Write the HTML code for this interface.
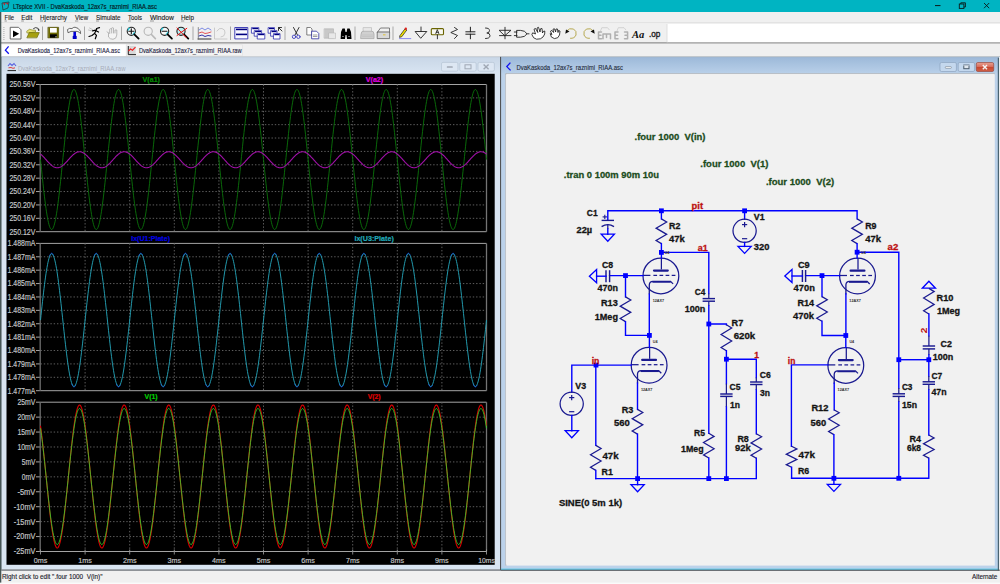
<!DOCTYPE html><html><head><meta charset="utf-8"><style>html,body{margin:0;padding:0;width:1000px;height:584px;overflow:hidden;background:#F0F0F0}svg text{font-family:"Liberation Sans",sans-serif}</style></head><body><svg width="1000" height="584" viewBox="0 0 1000 584" style="position:absolute;left:0;top:0">
<rect x="0" y="0" width="1000" height="584" fill="#F0F0F0"/>
<rect x="0" y="0" width="1000" height="12" fill="#00B4C2"/>
<text x="12.9" y="9.2" font-size="6.6" fill="#06181C" textLength="144" lengthAdjust="spacingAndGlyphs" stroke="#06181C" stroke-width="0.15">LTspice XVII - DvaKaskoda_12ax7s_raznimi_RIAA.asc</text>
<g><path d="M2,3 L9,2 L8,8 L3,10 Z" fill="none" stroke="#2a3a3a" stroke-width="0.8"/><path d="M3,3.2 L5.6,3 L4.5,5.5 Z M6,3 L8.5,2.8 L7.4,5 Z" fill="#C0202A"/></g>
<line x1="935" y1="5.6" x2="940.5" y2="5.6" stroke="#0A1A1A" stroke-width="1"/>
<rect x="959.3" y="4" width="4.6" height="4.4" fill="none" stroke="#0A1A1A" stroke-width="0.9"/><path d="M960.8,4 V2.8 H965.4 V7 H963.9" fill="none" stroke="#0A1A1A" stroke-width="0.9"/>
<line x1="984" y1="3" x2="989.2" y2="8.2" stroke="#0A1A1A" stroke-width="0.9"/>
<line x1="989.2" y1="3" x2="984" y2="8.2" stroke="#0A1A1A" stroke-width="0.9"/>
<text x="4.5" y="19.8" font-size="7" fill="#1A1A1A" textLength="9.6" lengthAdjust="spacingAndGlyphs" stroke="#1A1A1A" stroke-width="0.12">File</text>
<line x1="4.5" y1="21.0" x2="6.9" y2="21.0" stroke="#606060" stroke-width="0.6"/>
<text x="21.2" y="19.8" font-size="7" fill="#1A1A1A" textLength="11.0" lengthAdjust="spacingAndGlyphs" stroke="#1A1A1A" stroke-width="0.12">Edit</text>
<line x1="21.2" y1="21.0" x2="23.95" y2="21.0" stroke="#606060" stroke-width="0.6"/>
<text x="40" y="19.8" font-size="7" fill="#1A1A1A" textLength="27" lengthAdjust="spacingAndGlyphs" stroke="#1A1A1A" stroke-width="0.12">Hjerarchy</text>
<line x1="40" y1="21.0" x2="43.0" y2="21.0" stroke="#606060" stroke-width="0.6"/>
<text x="75" y="19.8" font-size="7" fill="#1A1A1A" textLength="13" lengthAdjust="spacingAndGlyphs" stroke="#1A1A1A" stroke-width="0.12">View</text>
<line x1="75" y1="21.0" x2="78.25" y2="21.0" stroke="#606060" stroke-width="0.6"/>
<text x="96" y="19.8" font-size="7" fill="#1A1A1A" textLength="24.5" lengthAdjust="spacingAndGlyphs" stroke="#1A1A1A" stroke-width="0.12">Simulate</text>
<line x1="96" y1="21.0" x2="99.0625" y2="21.0" stroke="#606060" stroke-width="0.6"/>
<text x="128" y="19.8" font-size="7" fill="#1A1A1A" textLength="14" lengthAdjust="spacingAndGlyphs" stroke="#1A1A1A" stroke-width="0.12">Tools</text>
<line x1="128" y1="21.0" x2="130.8" y2="21.0" stroke="#606060" stroke-width="0.6"/>
<text x="150" y="19.8" font-size="7" fill="#1A1A1A" textLength="24" lengthAdjust="spacingAndGlyphs" stroke="#1A1A1A" stroke-width="0.12">Window</text>
<line x1="150" y1="21.0" x2="154.0" y2="21.0" stroke="#606060" stroke-width="0.6"/>
<text x="181" y="19.8" font-size="7" fill="#1A1A1A" textLength="13" lengthAdjust="spacingAndGlyphs" stroke="#1A1A1A" stroke-width="0.12">Help</text>
<line x1="181" y1="21.0" x2="184.25" y2="21.0" stroke="#606060" stroke-width="0.6"/>
<rect x="1.3" y="23" width="1000" height="20" fill="#F0F0F0"/>
<line x1="0" y1="22.6" x2="1000" y2="22.6" stroke="#E2E2E2" stroke-width="1"/>
<line x1="0" y1="42.6" x2="1000" y2="42.6" stroke="#A0A0A0" stroke-width="1"/>
<rect x="667" y="24" width="333" height="18.2" fill="#FFFFFF"/>
<line x1="667" y1="24" x2="667" y2="42.5" stroke="#D8D8D8" stroke-width="0.8"/>
<rect x="3.4" y="27" width="1" height="1" fill="#A8A8A8"/>
<rect x="3.4" y="29" width="1" height="1" fill="#A8A8A8"/>
<rect x="3.4" y="31" width="1" height="1" fill="#A8A8A8"/>
<rect x="3.4" y="33" width="1" height="1" fill="#A8A8A8"/>
<rect x="3.4" y="35" width="1" height="1" fill="#A8A8A8"/>
<rect x="3.4" y="37" width="1" height="1" fill="#A8A8A8"/>
<rect x="3.4" y="39" width="1" height="1" fill="#A8A8A8"/>
<line x1="42.5" y1="26.5" x2="42.5" y2="40" stroke="#A8A8A8" stroke-width="1"/>
<line x1="63.5" y1="26.5" x2="63.5" y2="40" stroke="#A8A8A8" stroke-width="1"/>
<line x1="84.5" y1="26.5" x2="84.5" y2="40" stroke="#A8A8A8" stroke-width="1"/>
<line x1="121.5" y1="26.5" x2="121.5" y2="40" stroke="#A8A8A8" stroke-width="1"/>
<line x1="193" y1="26.5" x2="193" y2="40" stroke="#A8A8A8" stroke-width="1"/>
<line x1="230.5" y1="26.5" x2="230.5" y2="40" stroke="#A8A8A8" stroke-width="1"/>
<line x1="285" y1="26.5" x2="285" y2="40" stroke="#A8A8A8" stroke-width="1"/>
<line x1="355" y1="26.5" x2="355" y2="40" stroke="#A8A8A8" stroke-width="1"/>
<line x1="393" y1="26.5" x2="393" y2="40" stroke="#A8A8A8" stroke-width="1"/>

<g stroke-linejoin="round" stroke-linecap="round">
<!-- new/run schematic -->
<path d="M10.6,27.3 H18.5 L21,29.8 V39 H10.6 Z" fill="#FFFFFF" stroke="#5A5A5A" stroke-width="0.9"/>
<path d="M13,30.4 L19.2,33.8 L13,37.2 Z" fill="#000"/>
<!-- open folder -->
<path d="M27,31 L29.5,29.3 L32.5,30 L35.5,30.2 L35.5,32 L27.3,33 Z" fill="#E6E070" stroke="#7A7A10" stroke-width="0.6"/>
<path d="M27,37.5 L29.2,32.6 L39.3,32.6 L37,37.5 Z" fill="#A6A010" stroke="#6A6A00" stroke-width="0.7"/>
<path d="M33.5,28.5 Q35.5,26.6 38.2,28.4 L38.8,30.3" fill="none" stroke="#303030" stroke-width="0.9"/>
<path d="M37.5,29.6 L39.5,29.2 L38.9,31 Z" fill="#303030"/>
<!-- save floppy -->
<rect x="48.2" y="27.3" width="10.4" height="10.6" fill="#6E6A00" stroke="#4A4600" stroke-width="0.6"/>
<rect x="50" y="28" width="6.8" height="4.6" fill="#FFFFFF"/>
<rect x="50" y="34.3" width="6.8" height="3.4" fill="#000"/>
<rect x="55.5" y="36.3" width="1" height="1" fill="#fff"/>
<!-- hammer -->
<path d="M67.8,29.4 L69.6,28.4 L72,28.6 Q73,27.2 75,27.2 Q78.5,27.6 80.4,31.2 L80.6,33.6 L79.8,33.2 Q79.2,31.6 77.2,31.4 L71,31.4 L68.4,32.6 Z" fill="#F6F6F6" stroke="#4A4A4A" stroke-width="0.8"/>
<rect x="73.4" y="31.8" width="2.6" height="4.6" fill="#0000D8"/>
<rect x="72.7" y="35.8" width="4" height="3.2" rx="0.6" fill="#0000C8"/>
<!-- running man -->
<path d="M96.5,28.5 L99.5,27.7 M97,28.4 L94.5,33.5 L92,35.5 L89,36.5 M94.6,33.3 L96.5,35.3 L95.3,38.8 M95.6,30.2 L92.5,30.8 M95.5,30.5 L98.5,32" fill="none" stroke="#000" stroke-width="1.2"/>
<path d="M89.5,28 L92.5,29.5 M88.5,30 L91.5,30.8" stroke="#A0A0A0" stroke-width="0.6"/>
<!-- gray hand -->
<path d="M108.5,33 L108.5,37 Q110,39.3 113,39.3 Q116.5,39 116.8,35 L116.8,30 L115,30 L115,33 M113.5,33 L113.5,28 Q112.6,27.2 111.7,28 L111.7,33 M111.7,29 Q110.5,28 109.7,29.2 L109.7,33.5 M108.5,33 L107,31.8" fill="#F4F4F4" stroke="#B0B0B0" stroke-width="0.9"/>
<!-- magnifiers -->
<g fill="none" stroke-width="1.1">
<circle cx="131.3" cy="31.3" r="4.1" stroke="#222" fill="#F8F8F8"/><path d="M128.8,31.3 H133.8 M131.3,28.8 V33.8" stroke="#111"/><path d="M128.2,30 Q128.5,28.6 129.5,28.2" stroke="#30C8D8" stroke-width="1.3"/><path d="M134.3,32.3 Q134,33.8 133,34.3" stroke="#30C8D8" stroke-width="1.3"/><path d="M134.3,34.3 L138.6,38.6" stroke="#000" stroke-width="1.8"/>
<circle cx="148.2" cy="31.3" r="4.1" stroke="#B8B8B8"/><path d="M151.2,34.3 L155.4,38.6" stroke="#B8B8B8" stroke-width="1.6"/>
<circle cx="164.6" cy="31.3" r="4.1" stroke="#222" fill="#F8F8F8"/><path d="M162.2,31.3 H167" stroke="#111"/><path d="M161.6,30 Q161.9,28.6 162.9,28.2" stroke="#30C8D8" stroke-width="1.3"/><path d="M167.6,32.3 Q167.3,33.8 166.3,34.3" stroke="#30C8D8" stroke-width="1.3"/><path d="M167.6,34.3 L171.9,38.6" stroke="#000" stroke-width="1.8"/>
<circle cx="181" cy="31.3" r="4.1" stroke="#222" fill="#B8F0F4"/><path d="M184,34.3 L188.3,38.6" stroke="#000" stroke-width="1.8"/><path d="M177,28 L186.2,37.5 M186.8,28.3 L177,35.5" stroke="#F01010" stroke-width="1"/>
</g>
<!-- waveform icon -->
<path d="M198,39 H211" stroke="#303030" stroke-width="1"/><path d="M198.3,27.5 V39" stroke="#606060" stroke-width="0.7"/>
<path d="M199,30 L202,28 L205,30 L208,28 L211,30" fill="none" stroke="#6070E0" stroke-width="0.8"/>
<path d="M199,33 L202,32 L205,33.5 L208,33 L211,32" fill="none" stroke="#E03030" stroke-width="0.8"/>
<path d="M199,36 L202,35 L205,36.5 L208,35.5 L211,36" fill="none" stroke="#2020A0" stroke-width="0.9"/>
<!-- gray icon -->
<path d="M214.5,28 V39 H227 M217,31 Q219,27.5 222,28.5 Q225.5,29.5 225,33 Q224.5,37 221,37" fill="none" stroke="#C0C0C0" stroke-width="0.8"/>
<!-- tile -->
<rect x="235.2" y="27.5" width="12.6" height="11.4" fill="#F8F8FF" stroke="#3030B0" stroke-width="0.9"/>
<rect x="236" y="28.6" width="11" height="1.6" fill="#000080"/><rect x="236" y="33.6" width="11" height="1.6" fill="#000080"/>
<!-- cascade -->
<rect x="251.8" y="27.6" width="7" height="5.6" fill="#fff" stroke="#3030B0" stroke-width="0.8"/><rect x="252.3" y="28" width="6" height="1.2" fill="#000080"/>
<rect x="254.6" y="30.6" width="7" height="5.6" fill="#fff" stroke="#3030B0" stroke-width="0.8"/><rect x="255.1" y="31" width="6" height="1.2" fill="#000080"/>
<rect x="257.6" y="33.6" width="7.2" height="5.4" fill="#fff" stroke="#3030B0" stroke-width="0.8"/><rect x="258.1" y="34" width="6.2" height="1.2" fill="#000080"/>
<rect x="268.5" y="27.6" width="6" height="5.6" fill="#fff" stroke="#3030B0" stroke-width="0.8"/><rect x="269" y="28" width="5" height="1.2" fill="#000080"/>
<rect x="271" y="30.6" width="6" height="5.6" fill="#fff" stroke="#3030B0" stroke-width="0.8"/><rect x="271.5" y="31" width="5" height="1.2" fill="#000080"/>
<rect x="273.8" y="33.6" width="6.2" height="5.4" fill="#fff" stroke="#3030B0" stroke-width="0.8"/><rect x="274.3" y="34" width="5.2" height="1.2" fill="#000080"/>
<path d="M282,31 L278.5,27.5 M278.5,30.5 V27.5 H281.5" fill="none" stroke="#202020" stroke-width="0.9"/>
<!-- scissors -->
<path d="M293.5,27.5 L297.5,35 M299,27.5 L295,35" stroke="#202020" stroke-width="0.9"/>
<circle cx="294" cy="36.8" r="1.7" fill="none" stroke="#4040C0" stroke-width="0.9"/><circle cx="298.4" cy="36.8" r="1.7" fill="none" stroke="#4040C0" stroke-width="0.9"/>
<!-- copy -->
<path d="M307.2,27.5 H310.5 L312,29 V35 H307.2 Z" fill="#fff" stroke="#505050" stroke-width="0.7"/>
<path d="M312,31.2 H316.5 L318.8,33.5 V38.8 H312 Z" fill="#fff" stroke="#3030A0" stroke-width="0.8"/>
<path d="M313.3,35 H317 M313.3,36.5 H317" stroke="#606060" stroke-width="0.6"/>
<!-- paste gray -->
<rect x="324.5" y="28.8" width="9" height="9.4" fill="#C8C8C8" stroke="#B0B0B0" stroke-width="0.6"/>
<rect x="329" y="33" width="6.5" height="5.6" fill="#E8E8E8" stroke="#B8B8B8" stroke-width="0.6"/>
<!-- binoculars -->
<path d="M340.6,39 L341,32 L342.5,28.5 L344.8,28.5 L345.5,32 L346.6,32 L347.3,28.5 L349.6,28.5 L351,32 L351.5,39 L347,39 L346.5,35 L345.5,35 L345,39 Z" fill="#000"/>
<circle cx="343" cy="36.5" r="0.6" fill="#fff"/><circle cx="349" cy="36.5" r="0.6" fill="#fff"/>
<!-- printers -->
<path d="M361,34 Q361,31 364,31 L371,31 Q374,31 374,34 L374,38.6 L361,38.6 Z" fill="#D0D0D0" stroke="#A8A8A8" stroke-width="0.8"/>
<rect x="363.5" y="27.6" width="8" height="3.6" fill="#E8E8E8" stroke="#B0B0B0" stroke-width="0.6"/>
<path d="M362.5,35 H372.5 M362.5,36.6 H372.5" stroke="#B8B8B8" stroke-width="0.5"/>
<path d="M377.6,32 L380.5,28 H389.5 L389.5,32 Z" fill="#F0F0F0" stroke="#606060" stroke-width="0.8"/>
<rect x="377.6" y="32" width="12" height="6.6" fill="#D8D8D8" stroke="#606060" stroke-width="0.8"/>
<rect x="383" y="34.4" width="2.5" height="0.9" fill="#E0C020"/>
<!-- pencil -->
<path d="M400,35.5 L405,28.8 L406.8,30 L401.8,36.7 L399.9,37.3 Z" fill="#F0E000" stroke="#202020" stroke-width="0.7"/>
<circle cx="405.8" cy="28.8" r="1.2" fill="#E02020"/>
<path d="M399.5,38.6 H410.8" stroke="#8888EE" stroke-width="1"/>
<!-- ground -->
<path d="M421,27 V31.5 M415.5,31.5 H426.8 L421,38 Z" fill="none" stroke="#202020" stroke-width="0.9"/>
<!-- label -->
<rect x="431.3" y="28.6" width="12.2" height="6.2" rx="1" fill="#F8F8F0" stroke="#6A6400" stroke-width="1.1"/>
<path d="M437.4,34.8 V38.8" stroke="#202020" stroke-width="0.9"/>
<path d="M435.8,33.6 L437.3,29.6 L438.8,33.6 M436.3,32.3 H438.3" fill="none" stroke="#000" stroke-width="0.7"/>
<!-- resistor -->
<path d="M454.5,27.5 L457.5,29.5 L450.8,32.5 L457.5,35.5 L454.5,38.5" fill="none" stroke="#202020" stroke-width="0.9"/>
<!-- capacitor -->
<path d="M470.4,27.2 V31.8 M465.8,31.8 H475 M465.8,34.2 H475 M470.4,34.2 V38.8" fill="none" stroke="#202020" stroke-width="1"/>
<!-- inductor -->
<path d="M485.5,28 Q489.5,28 489.5,30.5 Q489.5,33 486.8,33 Q490,33 490,35.7 Q490,38.5 485.5,38.5" fill="none" stroke="#202020" stroke-width="0.9"/>
<!-- diode -->
<path d="M505,27.3 V38.8 M499.5,30.3 H511 L505,35.5 Z M499.5,35.6 H511" fill="none" stroke="#202020" stroke-width="0.9"/>
<!-- gate -->
<path d="M517,30.4 H520.5 Q525,30.4 527,33.8 Q525,37.2 520.5,37.2 H517 Z M514.3,32 H517 M514.3,35.6 H517 M527,33.8 H529" fill="none" stroke="#202020" stroke-width="0.9"/>
<!-- hands -->
<path d="M532,35 Q533,38.5 536.5,39.2 Q541,39.5 543,37 Q545.5,34 544.8,31 L543.2,31.5 L542.5,33 L542,28.5 L540.5,28.8 L540,32 L538.5,27.3 L537,28 L537.8,32.5 L535.5,28.5 L534,29.2 L535.5,34 L533,33 Z" fill="#FFFFFF" stroke="#101010" stroke-width="0.8"/>
<path d="M550.2,34 Q550.5,38 554.5,38.6 Q558.5,38.6 559.5,35 L560,31 L558.5,30.5 L558,32.5 L557.5,29 L556,29 L555.6,32 L554.5,28.8 L553,29.2 L553.6,32.5 L551.8,30.4 L550.5,31.2 L551.8,34.2 Z" fill="#FFFFFF" stroke="#101010" stroke-width="0.8"/>
<!-- undo / redo -->
<path d="M566.5,31 Q569.5,27.5 573.5,29 Q577,31 576,35 Q574.5,38.7 570.5,38.3" fill="none" stroke="#B0A040" stroke-width="0.9"/>
<path d="M565.3,33.8 L566,29.5 L569.5,31.5 Z" fill="#101010"/>
<path d="M593.5,31 Q590.5,27.5 586.5,29 Q583,31 584,35 Q585.5,38.7 589.5,38.3" fill="none" stroke="#B0A040" stroke-width="0.9"/>
<path d="M594.7,33.8 L594,29.5 L590.5,31.5 Z" fill="#101010"/>
<!-- gray E m -->
<path d="M598.5,32 V38.8 H601.5 M598.5,35.3 H601 M598.5,32 H601.5 M603,38.8 V34 H610.5 V38.8 M606.5,34 V37.5" fill="none" stroke="#B0B0B0" stroke-width="1.5"/>
<path d="M600.5,31 L601.8,27.7 H607.5 L609.3,29.8" fill="none" stroke="#C0C0C0" stroke-width="0.6"/>
<path d="M615,32 V38.8 H618 M615,35.3 H617.5 M615,32 H618 M624.5,32 H627.6 V38.8 H624.5 M625,35.3 H627.5" fill="none" stroke="#B0B0B0" stroke-width="1.5"/>
<path d="M617,31 L618.3,27.7 H624 L625.8,29.8" fill="none" stroke="#C0C0C0" stroke-width="0.6"/>
</g>

<text x="632" y="38.3" font-size="11" fill="#101010" font-weight="bold" font-style="italic" textLength="12.4" lengthAdjust="spacingAndGlyphs" style="font-family:'Liberation Serif',serif">Aa</text>
<text x="649" y="36.8" font-size="9.6" fill="#202020" textLength="11.4" lengthAdjust="spacingAndGlyphs" stroke="#202020" stroke-width="0.35">.op</text>
<rect x="1.3" y="43.2" width="1000" height="13.6" fill="#F0F0F0"/>
<line x1="0" y1="43.2" x2="1000" y2="43.2" stroke="#A6A6A6" stroke-width="0.9"/>
<rect x="1.3" y="44.6" width="124.5" height="11.4" fill="#FFFFFF"/>
<rect x="126.3" y="44.8" width="116" height="11" fill="#F3F3F3" stroke="#E2E2E2" stroke-width="0.6"/>
<path d="M8.6,46.3 L5.4,50.2 L8.8,53.8" fill="none" stroke="#1010F0" stroke-width="1.3"/>
<text x="17.7" y="53.2" font-size="7.2" fill="#202040" textLength="102.3" lengthAdjust="spacingAndGlyphs" stroke="#202040" stroke-width="0.12">DvaKaskoda_12ax7s_raznimi_RIAA.asc</text>
<g><rect x="127.6" y="46" width="8" height="8.6" fill="#D8D8D8"/><path d="M128.3,46 V54.6 H136" fill="none" stroke="#101010" stroke-width="0.9"/><path d="M128.5,51 L130.5,49 L132.5,50.2 L135.5,47.2" fill="none" stroke="#F02020" stroke-width="1.1"/></g>
<text x="138.9" y="53.2" font-size="7.2" fill="#202040" textLength="102.7" lengthAdjust="spacingAndGlyphs" stroke="#202040" stroke-width="0.12">DvaKaskoda_12ax7s_raznimi_RIAA.raw</text>
<defs><linearGradient id="gInact" x1="0" y1="0" x2="0" y2="1"><stop offset="0" stop-color="#C9D7E7"/><stop offset="1" stop-color="#D9E5F2"/></linearGradient><linearGradient id="gAct" x1="0" y1="0" x2="0" y2="1"><stop offset="0" stop-color="#9DB9D9"/><stop offset="1" stop-color="#B9D0E9"/></linearGradient><linearGradient id="gClose" x1="0" y1="0" x2="0" y2="1"><stop offset="0" stop-color="#E8A090"/><stop offset="0.45" stop-color="#D87060"/><stop offset="0.55" stop-color="#C84830"/><stop offset="1" stop-color="#D06048"/></linearGradient></defs>
<rect x="1.5" y="57" width="499" height="513.3" fill="#D9E5F2" stroke="#9AA6B2" stroke-width="0.8"/>
<rect x="1.9" y="57.4" width="498.2" height="16.6" fill="url(#gInact)"/>
<line x1="1.5" y1="570" x2="500.5" y2="570" stroke="#6A6A6A" stroke-width="1"/>
<g><path d="M8,66 L10,63.5 L12,65.5 L14,63.5 L16,66" fill="none" stroke="#5A62E0" stroke-width="1.1"/><path d="M8.5,67.8 L11,67.5 L13,68.3 L15,67.8" fill="none" stroke="#E04040" stroke-width="1"/><path d="M7.5,70.6 H16" stroke="#202020" stroke-width="1"/></g>
<text x="18" y="70.6" font-size="7.2" fill="#A8ACB8" textLength="107.5" lengthAdjust="spacingAndGlyphs">DvaKaskoda_12ax7s_raznimi_RIAA.raw</text>
<rect x="441.5" y="62.4" width="16.4" height="8.8" fill="#DDE7F3" rx="1.5" stroke="#B6C4D4" stroke-width="0.7"/>
<rect x="459.8" y="62.4" width="16.4" height="8.8" fill="#DDE7F3" rx="1.5" stroke="#B6C4D4" stroke-width="0.7"/>
<rect x="478" y="62.4" width="16.4" height="8.8" fill="#DDE7F3" rx="1.5" stroke="#B6C4D4" stroke-width="0.7"/>
<rect x="446.8" y="66.2" width="6" height="1.6" fill="#A0A8B4" rx="0.6"/>
<rect x="465" y="64.8" width="6" height="4" fill="none" stroke="#A0A8B4" stroke-width="1"/>
<path d="M483.6,64.4 L488.6,69.2 M488.6,64.4 L483.6,69.2" stroke="#A0A8B4" stroke-width="1.4"/>
<rect x="6.5" y="73.8" width="488.2" height="491" fill="#000000"/>
<rect x="500.6" y="57" width="499.4" height="513.3" fill="#BCD2EA" stroke="#7A8A9A" stroke-width="0.8"/>
<rect x="501" y="57.4" width="499" height="16.2" fill="url(#gAct)"/>
<line x1="500.6" y1="57" x2="500.6" y2="570" stroke="#4E4E4E" stroke-width="1"/>
<line x1="501" y1="569.2" x2="999.6" y2="569.2" stroke="#40C8EC" stroke-width="1"/>
<line x1="998.4" y1="57.8" x2="998.4" y2="570.6" stroke="#4A6472" stroke-width="1.2"/>
<rect x="999" y="57" width="1" height="514" fill="#EEEEEE"/>
<line x1="500.6" y1="570.2" x2="1000" y2="570.2" stroke="#505050" stroke-width="0.9"/>
<rect x="505.6" y="73.6" width="489.2" height="492" fill="#F1F1F1"/>
<line x1="505.6" y1="73.9" x2="994.8" y2="73.9" stroke="#A0A0A0" stroke-width="0.8"/>
<line x1="505.9" y1="73.6" x2="505.9" y2="565.6" stroke="#A0A0A0" stroke-width="0.8"/>
<line x1="506.4" y1="74.6" x2="994.4" y2="74.6" stroke="#FFFFFF" stroke-width="0.7"/>
<line x1="506.4" y1="74.6" x2="506.4" y2="564.6" stroke="#FFFFFF" stroke-width="0.7"/>
<path d="M510.4,62.6 L506.8,66.6 L510.6,70.4" fill="none" stroke="#1010F0" stroke-width="1.3"/>
<text x="516.5" y="70.2" font-size="7.2" fill="#1E2A3A" textLength="106.5" lengthAdjust="spacingAndGlyphs" stroke="#1E2A3A" stroke-width="0.12">DvaKaskoda_12ax7s_raznimi_RIAA.asc</text>
<rect x="940" y="62.5" width="16.4" height="9" fill="#C4D8EE" rx="1.5" stroke="#8CA4BE" stroke-width="0.7"/>
<rect x="958.2" y="62.5" width="16.4" height="9" fill="#C4D8EE" rx="1.5" stroke="#8CA4BE" stroke-width="0.7"/>
<rect x="976.3" y="62.5" width="17.4" height="9" fill="url(#gClose)" rx="1.5" stroke="#9A4A40" stroke-width="0.7"/>
<rect x="945.3" y="66.6" width="6" height="1.7" fill="#FFFFFF" rx="0.6" stroke="#5A6A7A" stroke-width="0.5"/>
<rect x="963.8" y="65.1" width="5.2" height="3.6" fill="#E0E8F0" stroke="#4A5A6A" stroke-width="1.0"/>
<line x1="963.3" y1="65.6" x2="969.5" y2="65.6" stroke="#E8F0F8" stroke-width="0.6"/>
<path d="M982.8,65 L987,69.2 M987,65 L982.8,69.2" stroke="#F4F4F4" stroke-width="1.4"/>
<rect x="0" y="12" width="1.3" height="572" fill="#465656"/>
<text x="2" y="579.4" font-size="6.8" fill="#1A1A2A" textLength="100.5" lengthAdjust="spacingAndGlyphs" stroke="#1A1A2A" stroke-width="0.12">Right click to edit ".four 1000  V(in)"</text>
<text x="972" y="579.4" font-size="6.8" fill="#1A1A2A" textLength="25.4" lengthAdjust="spacingAndGlyphs" stroke="#1A1A2A" stroke-width="0.12">Alternate</text>
<rect x="0" y="582.6" width="1000" height="1.4" fill="#FAFAFA"/>
<line x1="36" y1="84.5" x2="486.5" y2="84.5" stroke="#A4A4A4" stroke-width="1"/>
<text x="35.4" y="87.40" font-size="8.2" fill="#C4C6C8" stroke="#C4C6C8" stroke-width="0.18" text-anchor="end" textLength="26.0" lengthAdjust="spacingAndGlyphs">250.56V</text>
<line x1="36" y1="97.88181818181818" x2="40.5" y2="97.88181818181818" stroke="#A4A4A4" stroke-width="1"/>
<line x1="40.5" y1="97.88181818181818" x2="486.5" y2="97.88181818181818" stroke="#5E5E5E" stroke-width="1" stroke-dasharray="1.4 1.9"/>
<text x="35.4" y="100.78" font-size="8.2" fill="#C4C6C8" stroke="#C4C6C8" stroke-width="0.18" text-anchor="end" textLength="26.0" lengthAdjust="spacingAndGlyphs">250.52V</text>
<line x1="36" y1="111.26363636363637" x2="40.5" y2="111.26363636363637" stroke="#A4A4A4" stroke-width="1"/>
<line x1="40.5" y1="111.26363636363637" x2="486.5" y2="111.26363636363637" stroke="#5E5E5E" stroke-width="1" stroke-dasharray="1.4 1.9"/>
<text x="35.4" y="114.16" font-size="8.2" fill="#C4C6C8" stroke="#C4C6C8" stroke-width="0.18" text-anchor="end" textLength="26.0" lengthAdjust="spacingAndGlyphs">250.48V</text>
<line x1="36" y1="124.64545454545454" x2="40.5" y2="124.64545454545454" stroke="#A4A4A4" stroke-width="1"/>
<line x1="40.5" y1="124.64545454545454" x2="486.5" y2="124.64545454545454" stroke="#5E5E5E" stroke-width="1" stroke-dasharray="1.4 1.9"/>
<text x="35.4" y="127.55" font-size="8.2" fill="#C4C6C8" stroke="#C4C6C8" stroke-width="0.18" text-anchor="end" textLength="26.0" lengthAdjust="spacingAndGlyphs">250.44V</text>
<line x1="36" y1="138.02727272727273" x2="40.5" y2="138.02727272727273" stroke="#A4A4A4" stroke-width="1"/>
<line x1="40.5" y1="138.02727272727273" x2="486.5" y2="138.02727272727273" stroke="#5E5E5E" stroke-width="1" stroke-dasharray="1.4 1.9"/>
<text x="35.4" y="140.93" font-size="8.2" fill="#C4C6C8" stroke="#C4C6C8" stroke-width="0.18" text-anchor="end" textLength="26.0" lengthAdjust="spacingAndGlyphs">250.40V</text>
<line x1="36" y1="151.4090909090909" x2="40.5" y2="151.4090909090909" stroke="#A4A4A4" stroke-width="1"/>
<line x1="40.5" y1="151.4090909090909" x2="486.5" y2="151.4090909090909" stroke="#5E5E5E" stroke-width="1" stroke-dasharray="1.4 1.9"/>
<text x="35.4" y="154.31" font-size="8.2" fill="#C4C6C8" stroke="#C4C6C8" stroke-width="0.18" text-anchor="end" textLength="26.0" lengthAdjust="spacingAndGlyphs">250.36V</text>
<line x1="36" y1="164.79090909090908" x2="40.5" y2="164.79090909090908" stroke="#A4A4A4" stroke-width="1"/>
<line x1="40.5" y1="164.79090909090908" x2="486.5" y2="164.79090909090908" stroke="#5E5E5E" stroke-width="1" stroke-dasharray="1.4 1.9"/>
<text x="35.4" y="167.69" font-size="8.2" fill="#C4C6C8" stroke="#C4C6C8" stroke-width="0.18" text-anchor="end" textLength="26.0" lengthAdjust="spacingAndGlyphs">250.32V</text>
<line x1="36" y1="178.1727272727273" x2="40.5" y2="178.1727272727273" stroke="#A4A4A4" stroke-width="1"/>
<line x1="40.5" y1="178.1727272727273" x2="486.5" y2="178.1727272727273" stroke="#5E5E5E" stroke-width="1" stroke-dasharray="1.4 1.9"/>
<text x="35.4" y="181.07" font-size="8.2" fill="#C4C6C8" stroke="#C4C6C8" stroke-width="0.18" text-anchor="end" textLength="26.0" lengthAdjust="spacingAndGlyphs">250.28V</text>
<line x1="36" y1="191.55454545454546" x2="40.5" y2="191.55454545454546" stroke="#A4A4A4" stroke-width="1"/>
<line x1="40.5" y1="191.55454545454546" x2="486.5" y2="191.55454545454546" stroke="#5E5E5E" stroke-width="1" stroke-dasharray="1.4 1.9"/>
<text x="35.4" y="194.45" font-size="8.2" fill="#C4C6C8" stroke="#C4C6C8" stroke-width="0.18" text-anchor="end" textLength="26.0" lengthAdjust="spacingAndGlyphs">250.24V</text>
<line x1="36" y1="204.93636363636364" x2="40.5" y2="204.93636363636364" stroke="#A4A4A4" stroke-width="1"/>
<line x1="40.5" y1="204.93636363636364" x2="486.5" y2="204.93636363636364" stroke="#5E5E5E" stroke-width="1" stroke-dasharray="1.4 1.9"/>
<text x="35.4" y="207.84" font-size="8.2" fill="#C4C6C8" stroke="#C4C6C8" stroke-width="0.18" text-anchor="end" textLength="26.0" lengthAdjust="spacingAndGlyphs">250.20V</text>
<line x1="36" y1="218.3181818181818" x2="40.5" y2="218.3181818181818" stroke="#A4A4A4" stroke-width="1"/>
<line x1="40.5" y1="218.3181818181818" x2="486.5" y2="218.3181818181818" stroke="#5E5E5E" stroke-width="1" stroke-dasharray="1.4 1.9"/>
<text x="35.4" y="221.22" font-size="8.2" fill="#C4C6C8" stroke="#C4C6C8" stroke-width="0.18" text-anchor="end" textLength="26.0" lengthAdjust="spacingAndGlyphs">250.16V</text>
<line x1="36" y1="231.7" x2="486.5" y2="231.7" stroke="#A4A4A4" stroke-width="1"/>
<text x="35.4" y="234.60" font-size="8.2" fill="#C4C6C8" stroke="#C4C6C8" stroke-width="0.18" text-anchor="end" textLength="26.0" lengthAdjust="spacingAndGlyphs">250.12V</text>
<line x1="40.2" y1="84.5" x2="40.2" y2="231.7" stroke="#686868" stroke-width="1.4"/>
<line x1="486.5" y1="84.5" x2="486.5" y2="231.7" stroke="#747474" stroke-width="1.3"/>
<line x1="85.1" y1="84.5" x2="85.1" y2="231.7" stroke="#5E5E5E" stroke-width="1" stroke-dasharray="1.4 1.9"/>
<line x1="129.7" y1="84.5" x2="129.7" y2="231.7" stroke="#5E5E5E" stroke-width="1" stroke-dasharray="1.4 1.9"/>
<line x1="174.3" y1="84.5" x2="174.3" y2="231.7" stroke="#5E5E5E" stroke-width="1" stroke-dasharray="1.4 1.9"/>
<line x1="218.9" y1="84.5" x2="218.9" y2="231.7" stroke="#5E5E5E" stroke-width="1" stroke-dasharray="1.4 1.9"/>
<line x1="263.5" y1="84.5" x2="263.5" y2="231.7" stroke="#5E5E5E" stroke-width="1" stroke-dasharray="1.4 1.9"/>
<line x1="308.1" y1="84.5" x2="308.1" y2="231.7" stroke="#5E5E5E" stroke-width="1" stroke-dasharray="1.4 1.9"/>
<line x1="352.7" y1="84.5" x2="352.7" y2="231.7" stroke="#5E5E5E" stroke-width="1" stroke-dasharray="1.4 1.9"/>
<line x1="397.3" y1="84.5" x2="397.3" y2="231.7" stroke="#5E5E5E" stroke-width="1" stroke-dasharray="1.4 1.9"/>
<line x1="441.90000000000003" y1="84.5" x2="441.90000000000003" y2="231.7" stroke="#5E5E5E" stroke-width="1" stroke-dasharray="1.4 1.9"/>
<line x1="36" y1="243.4" x2="486.5" y2="243.4" stroke="#A4A4A4" stroke-width="1"/>
<text x="35.4" y="246.30" font-size="8.2" fill="#C4C6C8" stroke="#C4C6C8" stroke-width="0.18" text-anchor="end" textLength="27.9" lengthAdjust="spacingAndGlyphs">1.488mA</text>
<line x1="36" y1="256.7909090909091" x2="40.5" y2="256.7909090909091" stroke="#A4A4A4" stroke-width="1"/>
<line x1="40.5" y1="256.7909090909091" x2="486.5" y2="256.7909090909091" stroke="#5E5E5E" stroke-width="1" stroke-dasharray="1.4 1.9"/>
<text x="35.4" y="259.69" font-size="8.2" fill="#C4C6C8" stroke="#C4C6C8" stroke-width="0.18" text-anchor="end" textLength="27.9" lengthAdjust="spacingAndGlyphs">1.487mA</text>
<line x1="36" y1="270.1818181818182" x2="40.5" y2="270.1818181818182" stroke="#A4A4A4" stroke-width="1"/>
<line x1="40.5" y1="270.1818181818182" x2="486.5" y2="270.1818181818182" stroke="#5E5E5E" stroke-width="1" stroke-dasharray="1.4 1.9"/>
<text x="35.4" y="273.08" font-size="8.2" fill="#C4C6C8" stroke="#C4C6C8" stroke-width="0.18" text-anchor="end" textLength="27.9" lengthAdjust="spacingAndGlyphs">1.486mA</text>
<line x1="36" y1="283.57272727272726" x2="40.5" y2="283.57272727272726" stroke="#A4A4A4" stroke-width="1"/>
<line x1="40.5" y1="283.57272727272726" x2="486.5" y2="283.57272727272726" stroke="#5E5E5E" stroke-width="1" stroke-dasharray="1.4 1.9"/>
<text x="35.4" y="286.47" font-size="8.2" fill="#C4C6C8" stroke="#C4C6C8" stroke-width="0.18" text-anchor="end" textLength="27.9" lengthAdjust="spacingAndGlyphs">1.485mA</text>
<line x1="36" y1="296.96363636363634" x2="40.5" y2="296.96363636363634" stroke="#A4A4A4" stroke-width="1"/>
<line x1="40.5" y1="296.96363636363634" x2="486.5" y2="296.96363636363634" stroke="#5E5E5E" stroke-width="1" stroke-dasharray="1.4 1.9"/>
<text x="35.4" y="299.86" font-size="8.2" fill="#C4C6C8" stroke="#C4C6C8" stroke-width="0.18" text-anchor="end" textLength="27.9" lengthAdjust="spacingAndGlyphs">1.484mA</text>
<line x1="36" y1="310.3545454545455" x2="40.5" y2="310.3545454545455" stroke="#A4A4A4" stroke-width="1"/>
<line x1="40.5" y1="310.3545454545455" x2="486.5" y2="310.3545454545455" stroke="#5E5E5E" stroke-width="1" stroke-dasharray="1.4 1.9"/>
<text x="35.4" y="313.25" font-size="8.2" fill="#C4C6C8" stroke="#C4C6C8" stroke-width="0.18" text-anchor="end" textLength="27.9" lengthAdjust="spacingAndGlyphs">1.483mA</text>
<line x1="36" y1="323.74545454545455" x2="40.5" y2="323.74545454545455" stroke="#A4A4A4" stroke-width="1"/>
<line x1="40.5" y1="323.74545454545455" x2="486.5" y2="323.74545454545455" stroke="#5E5E5E" stroke-width="1" stroke-dasharray="1.4 1.9"/>
<text x="35.4" y="326.65" font-size="8.2" fill="#C4C6C8" stroke="#C4C6C8" stroke-width="0.18" text-anchor="end" textLength="27.9" lengthAdjust="spacingAndGlyphs">1.482mA</text>
<line x1="36" y1="337.1363636363636" x2="40.5" y2="337.1363636363636" stroke="#A4A4A4" stroke-width="1"/>
<line x1="40.5" y1="337.1363636363636" x2="486.5" y2="337.1363636363636" stroke="#5E5E5E" stroke-width="1" stroke-dasharray="1.4 1.9"/>
<text x="35.4" y="340.04" font-size="8.2" fill="#C4C6C8" stroke="#C4C6C8" stroke-width="0.18" text-anchor="end" textLength="27.9" lengthAdjust="spacingAndGlyphs">1.481mA</text>
<line x1="36" y1="350.5272727272727" x2="40.5" y2="350.5272727272727" stroke="#A4A4A4" stroke-width="1"/>
<line x1="40.5" y1="350.5272727272727" x2="486.5" y2="350.5272727272727" stroke="#5E5E5E" stroke-width="1" stroke-dasharray="1.4 1.9"/>
<text x="35.4" y="353.43" font-size="8.2" fill="#C4C6C8" stroke="#C4C6C8" stroke-width="0.18" text-anchor="end" textLength="27.9" lengthAdjust="spacingAndGlyphs">1.480mA</text>
<line x1="36" y1="363.9181818181818" x2="40.5" y2="363.9181818181818" stroke="#A4A4A4" stroke-width="1"/>
<line x1="40.5" y1="363.9181818181818" x2="486.5" y2="363.9181818181818" stroke="#5E5E5E" stroke-width="1" stroke-dasharray="1.4 1.9"/>
<text x="35.4" y="366.82" font-size="8.2" fill="#C4C6C8" stroke="#C4C6C8" stroke-width="0.18" text-anchor="end" textLength="27.9" lengthAdjust="spacingAndGlyphs">1.479mA</text>
<line x1="36" y1="377.30909090909086" x2="40.5" y2="377.30909090909086" stroke="#A4A4A4" stroke-width="1"/>
<line x1="40.5" y1="377.30909090909086" x2="486.5" y2="377.30909090909086" stroke="#5E5E5E" stroke-width="1" stroke-dasharray="1.4 1.9"/>
<text x="35.4" y="380.21" font-size="8.2" fill="#C4C6C8" stroke="#C4C6C8" stroke-width="0.18" text-anchor="end" textLength="27.9" lengthAdjust="spacingAndGlyphs">1.478mA</text>
<line x1="36" y1="390.7" x2="486.5" y2="390.7" stroke="#A4A4A4" stroke-width="1"/>
<text x="35.4" y="393.60" font-size="8.2" fill="#C4C6C8" stroke="#C4C6C8" stroke-width="0.18" text-anchor="end" textLength="27.9" lengthAdjust="spacingAndGlyphs">1.477mA</text>
<line x1="40.2" y1="243.4" x2="40.2" y2="390.7" stroke="#686868" stroke-width="1.4"/>
<line x1="486.5" y1="243.4" x2="486.5" y2="390.7" stroke="#747474" stroke-width="1.3"/>
<line x1="85.1" y1="243.4" x2="85.1" y2="390.7" stroke="#5E5E5E" stroke-width="1" stroke-dasharray="1.4 1.9"/>
<line x1="129.7" y1="243.4" x2="129.7" y2="390.7" stroke="#5E5E5E" stroke-width="1" stroke-dasharray="1.4 1.9"/>
<line x1="174.3" y1="243.4" x2="174.3" y2="390.7" stroke="#5E5E5E" stroke-width="1" stroke-dasharray="1.4 1.9"/>
<line x1="218.9" y1="243.4" x2="218.9" y2="390.7" stroke="#5E5E5E" stroke-width="1" stroke-dasharray="1.4 1.9"/>
<line x1="263.5" y1="243.4" x2="263.5" y2="390.7" stroke="#5E5E5E" stroke-width="1" stroke-dasharray="1.4 1.9"/>
<line x1="308.1" y1="243.4" x2="308.1" y2="390.7" stroke="#5E5E5E" stroke-width="1" stroke-dasharray="1.4 1.9"/>
<line x1="352.7" y1="243.4" x2="352.7" y2="390.7" stroke="#5E5E5E" stroke-width="1" stroke-dasharray="1.4 1.9"/>
<line x1="397.3" y1="243.4" x2="397.3" y2="390.7" stroke="#5E5E5E" stroke-width="1" stroke-dasharray="1.4 1.9"/>
<line x1="441.90000000000003" y1="243.4" x2="441.90000000000003" y2="390.7" stroke="#5E5E5E" stroke-width="1" stroke-dasharray="1.4 1.9"/>
<line x1="36" y1="402.2" x2="486.5" y2="402.2" stroke="#A4A4A4" stroke-width="1"/>
<text x="35.4" y="405.10" font-size="8.2" fill="#C4C6C8" stroke="#C4C6C8" stroke-width="0.18" text-anchor="end" textLength="18.0" lengthAdjust="spacingAndGlyphs">25mV</text>
<line x1="36" y1="417.13" x2="40.5" y2="417.13" stroke="#A4A4A4" stroke-width="1"/>
<line x1="40.5" y1="417.13" x2="486.5" y2="417.13" stroke="#5E5E5E" stroke-width="1" stroke-dasharray="1.4 1.9"/>
<text x="35.4" y="420.03" font-size="8.2" fill="#C4C6C8" stroke="#C4C6C8" stroke-width="0.18" text-anchor="end" textLength="18.0" lengthAdjust="spacingAndGlyphs">20mV</text>
<line x1="36" y1="432.06" x2="40.5" y2="432.06" stroke="#A4A4A4" stroke-width="1"/>
<line x1="40.5" y1="432.06" x2="486.5" y2="432.06" stroke="#5E5E5E" stroke-width="1" stroke-dasharray="1.4 1.9"/>
<text x="35.4" y="434.96" font-size="8.2" fill="#C4C6C8" stroke="#C4C6C8" stroke-width="0.18" text-anchor="end" textLength="18.0" lengthAdjust="spacingAndGlyphs">15mV</text>
<line x1="36" y1="446.99" x2="40.5" y2="446.99" stroke="#A4A4A4" stroke-width="1"/>
<line x1="40.5" y1="446.99" x2="486.5" y2="446.99" stroke="#5E5E5E" stroke-width="1" stroke-dasharray="1.4 1.9"/>
<text x="35.4" y="449.89" font-size="8.2" fill="#C4C6C8" stroke="#C4C6C8" stroke-width="0.18" text-anchor="end" textLength="18.0" lengthAdjust="spacingAndGlyphs">10mV</text>
<line x1="36" y1="461.92" x2="40.5" y2="461.92" stroke="#A4A4A4" stroke-width="1"/>
<line x1="40.5" y1="461.92" x2="486.5" y2="461.92" stroke="#5E5E5E" stroke-width="1" stroke-dasharray="1.4 1.9"/>
<text x="35.4" y="464.82" font-size="8.2" fill="#C4C6C8" stroke="#C4C6C8" stroke-width="0.18" text-anchor="end" textLength="13.6" lengthAdjust="spacingAndGlyphs">5mV</text>
<line x1="36" y1="476.85" x2="40.5" y2="476.85" stroke="#A4A4A4" stroke-width="1"/>
<line x1="40.5" y1="476.85" x2="486.5" y2="476.85" stroke="#5E5E5E" stroke-width="1" stroke-dasharray="1.4 1.9"/>
<text x="35.4" y="479.75" font-size="8.2" fill="#C4C6C8" stroke="#C4C6C8" stroke-width="0.18" text-anchor="end" textLength="13.6" lengthAdjust="spacingAndGlyphs">0mV</text>
<line x1="36" y1="491.78" x2="40.5" y2="491.78" stroke="#A4A4A4" stroke-width="1"/>
<line x1="40.5" y1="491.78" x2="486.5" y2="491.78" stroke="#5E5E5E" stroke-width="1" stroke-dasharray="1.4 1.9"/>
<text x="35.4" y="494.68" font-size="8.2" fill="#C4C6C8" stroke="#C4C6C8" stroke-width="0.18" text-anchor="end" textLength="18.0" lengthAdjust="spacingAndGlyphs">-5mV</text>
<line x1="36" y1="506.71" x2="40.5" y2="506.71" stroke="#A4A4A4" stroke-width="1"/>
<line x1="40.5" y1="506.71" x2="486.5" y2="506.71" stroke="#5E5E5E" stroke-width="1" stroke-dasharray="1.4 1.9"/>
<text x="35.4" y="509.61" font-size="8.2" fill="#C4C6C8" stroke="#C4C6C8" stroke-width="0.18" text-anchor="end" textLength="21.6" lengthAdjust="spacingAndGlyphs">-10mV</text>
<line x1="36" y1="521.64" x2="40.5" y2="521.64" stroke="#A4A4A4" stroke-width="1"/>
<line x1="40.5" y1="521.64" x2="486.5" y2="521.64" stroke="#5E5E5E" stroke-width="1" stroke-dasharray="1.4 1.9"/>
<text x="35.4" y="524.54" font-size="8.2" fill="#C4C6C8" stroke="#C4C6C8" stroke-width="0.18" text-anchor="end" textLength="21.6" lengthAdjust="spacingAndGlyphs">-15mV</text>
<line x1="36" y1="536.5699999999999" x2="40.5" y2="536.5699999999999" stroke="#A4A4A4" stroke-width="1"/>
<line x1="40.5" y1="536.5699999999999" x2="486.5" y2="536.5699999999999" stroke="#5E5E5E" stroke-width="1" stroke-dasharray="1.4 1.9"/>
<text x="35.4" y="539.47" font-size="8.2" fill="#C4C6C8" stroke="#C4C6C8" stroke-width="0.18" text-anchor="end" textLength="21.6" lengthAdjust="spacingAndGlyphs">-20mV</text>
<line x1="36" y1="551.5" x2="486.5" y2="551.5" stroke="#A4A4A4" stroke-width="1"/>
<text x="35.4" y="554.40" font-size="8.2" fill="#C4C6C8" stroke="#C4C6C8" stroke-width="0.18" text-anchor="end" textLength="21.6" lengthAdjust="spacingAndGlyphs">-25mV</text>
<line x1="40.2" y1="402.2" x2="40.2" y2="551.5" stroke="#686868" stroke-width="1.4"/>
<line x1="486.5" y1="402.2" x2="486.5" y2="551.5" stroke="#747474" stroke-width="1.3"/>
<line x1="85.1" y1="402.2" x2="85.1" y2="551.5" stroke="#5E5E5E" stroke-width="1" stroke-dasharray="1.4 1.9"/>
<line x1="85.1" y1="549.5" x2="85.1" y2="554.5" stroke="#A4A4A4" stroke-width="0.8"/>
<line x1="129.7" y1="402.2" x2="129.7" y2="551.5" stroke="#5E5E5E" stroke-width="1" stroke-dasharray="1.4 1.9"/>
<line x1="129.7" y1="549.5" x2="129.7" y2="554.5" stroke="#A4A4A4" stroke-width="0.8"/>
<line x1="174.3" y1="402.2" x2="174.3" y2="551.5" stroke="#5E5E5E" stroke-width="1" stroke-dasharray="1.4 1.9"/>
<line x1="174.3" y1="549.5" x2="174.3" y2="554.5" stroke="#A4A4A4" stroke-width="0.8"/>
<line x1="218.9" y1="402.2" x2="218.9" y2="551.5" stroke="#5E5E5E" stroke-width="1" stroke-dasharray="1.4 1.9"/>
<line x1="218.9" y1="549.5" x2="218.9" y2="554.5" stroke="#A4A4A4" stroke-width="0.8"/>
<line x1="263.5" y1="402.2" x2="263.5" y2="551.5" stroke="#5E5E5E" stroke-width="1" stroke-dasharray="1.4 1.9"/>
<line x1="263.5" y1="549.5" x2="263.5" y2="554.5" stroke="#A4A4A4" stroke-width="0.8"/>
<line x1="308.1" y1="402.2" x2="308.1" y2="551.5" stroke="#5E5E5E" stroke-width="1" stroke-dasharray="1.4 1.9"/>
<line x1="308.1" y1="549.5" x2="308.1" y2="554.5" stroke="#A4A4A4" stroke-width="0.8"/>
<line x1="352.7" y1="402.2" x2="352.7" y2="551.5" stroke="#5E5E5E" stroke-width="1" stroke-dasharray="1.4 1.9"/>
<line x1="352.7" y1="549.5" x2="352.7" y2="554.5" stroke="#A4A4A4" stroke-width="0.8"/>
<line x1="397.3" y1="402.2" x2="397.3" y2="551.5" stroke="#5E5E5E" stroke-width="1" stroke-dasharray="1.4 1.9"/>
<line x1="397.3" y1="549.5" x2="397.3" y2="554.5" stroke="#A4A4A4" stroke-width="0.8"/>
<line x1="441.90000000000003" y1="402.2" x2="441.90000000000003" y2="551.5" stroke="#5E5E5E" stroke-width="1" stroke-dasharray="1.4 1.9"/>
<line x1="441.90000000000003" y1="549.5" x2="441.90000000000003" y2="554.5" stroke="#A4A4A4" stroke-width="0.8"/>
<text x="40.50" y="562.6" font-size="8" fill="#C4C6C8" stroke="#C4C6C8" stroke-width="0.18" text-anchor="middle" textLength="13.6" lengthAdjust="spacingAndGlyphs">0ms</text>
<line x1="40.5" y1="549.5" x2="40.5" y2="554.5" stroke="#A4A4A4" stroke-width="0.8"/>
<text x="85.10" y="562.6" font-size="8" fill="#C4C6C8" stroke="#C4C6C8" stroke-width="0.18" text-anchor="middle" textLength="13.6" lengthAdjust="spacingAndGlyphs">1ms</text>
<text x="129.70" y="562.6" font-size="8" fill="#C4C6C8" stroke="#C4C6C8" stroke-width="0.18" text-anchor="middle" textLength="13.6" lengthAdjust="spacingAndGlyphs">2ms</text>
<text x="174.30" y="562.6" font-size="8" fill="#C4C6C8" stroke="#C4C6C8" stroke-width="0.18" text-anchor="middle" textLength="13.6" lengthAdjust="spacingAndGlyphs">3ms</text>
<text x="218.90" y="562.6" font-size="8" fill="#C4C6C8" stroke="#C4C6C8" stroke-width="0.18" text-anchor="middle" textLength="13.6" lengthAdjust="spacingAndGlyphs">4ms</text>
<text x="263.50" y="562.6" font-size="8" fill="#C4C6C8" stroke="#C4C6C8" stroke-width="0.18" text-anchor="middle" textLength="13.6" lengthAdjust="spacingAndGlyphs">5ms</text>
<text x="308.10" y="562.6" font-size="8" fill="#C4C6C8" stroke="#C4C6C8" stroke-width="0.18" text-anchor="middle" textLength="13.6" lengthAdjust="spacingAndGlyphs">6ms</text>
<text x="352.70" y="562.6" font-size="8" fill="#C4C6C8" stroke="#C4C6C8" stroke-width="0.18" text-anchor="middle" textLength="13.6" lengthAdjust="spacingAndGlyphs">7ms</text>
<text x="397.30" y="562.6" font-size="8" fill="#C4C6C8" stroke="#C4C6C8" stroke-width="0.18" text-anchor="middle" textLength="13.6" lengthAdjust="spacingAndGlyphs">8ms</text>
<text x="441.90" y="562.6" font-size="8" fill="#C4C6C8" stroke="#C4C6C8" stroke-width="0.18" text-anchor="middle" textLength="13.6" lengthAdjust="spacingAndGlyphs">9ms</text>
<text x="486.50" y="562.6" font-size="8" fill="#C4C6C8" stroke="#C4C6C8" stroke-width="0.18" text-anchor="middle" textLength="16.7" lengthAdjust="spacingAndGlyphs">10ms</text>
<line x1="486.5" y1="549.5" x2="486.5" y2="554.5" stroke="#A4A4A4" stroke-width="0.8"/>
<polyline points="40.50,159.50 41.00,164.43 41.50,169.33 42.00,174.18 42.50,178.96 43.00,183.65 43.50,188.21 44.00,192.63 44.50,196.89 45.00,200.96 45.50,204.83 46.00,208.47 46.50,211.87 47.00,215.01 47.50,217.87 48.00,220.45 48.50,222.72 49.00,224.68 49.50,226.31 50.00,227.62 50.50,228.58 51.00,229.21 51.50,229.48 52.00,229.41 52.50,229.00 53.00,228.24 53.50,227.14 54.00,225.70 54.50,223.93 55.00,221.85 55.50,219.45 56.00,216.76 56.50,213.79 57.00,210.54 57.50,207.04 58.00,203.31 58.50,199.36 59.00,195.21 59.50,190.88 60.00,186.40 60.50,181.79 61.00,177.06 61.50,172.25 62.00,167.37 62.50,162.46 63.00,157.53 63.50,152.61 64.00,147.72 64.50,142.90 65.00,138.15 65.50,133.51 66.00,129.00 66.50,124.64 67.00,120.46 67.50,116.46 68.00,112.69 68.50,109.14 69.00,105.84 69.50,102.81 70.00,100.06 70.50,97.61 71.00,95.46 71.50,93.63 72.00,92.12 72.50,90.96 73.00,90.13 73.50,89.64 74.00,89.50 74.50,89.71 75.00,90.26 75.50,91.16 76.00,92.40 76.50,93.97 77.00,95.86 77.50,98.07 78.00,100.59 78.50,103.40 79.00,106.48 79.50,109.83 80.00,113.42 80.50,117.25 81.00,121.28 81.50,125.50 82.00,129.89 82.50,134.43 83.00,139.09 83.50,143.85 84.00,148.70 84.50,153.59 85.00,158.51 85.50,163.44 86.00,168.35 86.50,173.22 87.00,178.01 87.50,182.72 88.00,187.31 88.50,191.76 89.00,196.05 89.50,200.16 90.00,204.07 90.50,207.76 91.00,211.21 91.50,214.40 92.00,217.32 92.50,219.96 93.00,222.29 93.50,224.31 94.00,226.01 94.50,227.38 95.00,228.42 95.50,229.11 96.00,229.46 96.50,229.46 97.00,229.11 97.50,228.42 98.00,227.38 98.50,226.01 99.00,224.31 99.50,222.29 100.00,219.96 100.50,217.32 101.00,214.40 101.50,211.21 102.00,207.76 102.50,204.07 103.00,200.16 103.50,196.05 104.00,191.76 104.50,187.31 105.00,182.72 105.50,178.01 106.00,173.22 106.50,168.35 107.00,163.44 107.50,158.51 108.00,153.59 108.50,148.70 109.00,143.85 109.50,139.09 110.00,134.43 110.50,129.89 111.00,125.50 111.50,121.28 112.00,117.25 112.50,113.42 113.00,109.83 113.50,106.48 114.00,103.40 114.50,100.59 115.00,98.07 115.50,95.86 116.00,93.97 116.50,92.40 117.00,91.16 117.50,90.26 118.00,89.71 118.50,89.50 119.00,89.64 119.50,90.13 120.00,90.96 120.50,92.12 121.00,93.63 121.50,95.46 122.00,97.61 122.50,100.06 123.00,102.81 123.50,105.84 124.00,109.14 124.50,112.69 125.00,116.46 125.50,120.46 126.00,124.64 126.50,129.00 127.00,133.51 127.50,138.15 128.00,142.90 128.50,147.72 129.00,152.61 129.50,157.53 130.00,162.46 130.50,167.37 131.00,172.25 131.50,177.06 132.00,181.79 132.50,186.40 133.00,190.88 133.50,195.21 134.00,199.36 134.50,203.31 135.00,207.04 135.50,210.54 136.00,213.79 136.50,216.76 137.00,219.45 137.50,221.85 138.00,223.93 138.50,225.70 139.00,227.14 139.50,228.24 140.00,229.00 140.50,229.41 141.00,229.48 141.50,229.21 142.00,228.58 142.50,227.62 143.00,226.31 143.50,224.68 144.00,222.72 144.50,220.45 145.00,217.87 145.50,215.01 146.00,211.87 146.50,208.47 147.00,204.83 147.50,200.96 148.00,196.89 148.50,192.63 149.00,188.21 149.50,183.65 150.00,178.96 150.50,174.18 151.00,169.33 151.50,164.43 152.00,159.50 152.50,154.57 153.00,149.67 153.50,144.82 154.00,140.04 154.50,135.35 155.00,130.79 155.50,126.37 156.00,122.11 156.50,118.04 157.00,114.17 157.50,110.53 158.00,107.13 158.50,103.99 159.00,101.13 159.50,98.55 160.00,96.28 160.50,94.32 161.00,92.69 161.50,91.38 162.00,90.42 162.50,89.79 163.00,89.52 163.50,89.59 164.00,90.00 164.50,90.76 165.00,91.86 165.50,93.30 166.00,95.07 166.50,97.15 167.00,99.55 167.50,102.24 168.00,105.21 168.50,108.46 169.00,111.96 169.50,115.69 170.00,119.64 170.50,123.79 171.00,128.12 171.50,132.60 172.00,137.21 172.50,141.94 173.00,146.75 173.50,151.63 174.00,156.54 174.50,161.47 175.00,166.39 175.50,171.28 176.00,176.10 176.50,180.85 177.00,185.49 177.50,190.00 178.00,194.36 178.50,198.54 179.00,202.54 179.50,206.31 180.00,209.86 180.50,213.16 181.00,216.19 181.50,218.94 182.00,221.39 182.50,223.54 183.00,225.37 183.50,226.88 184.00,228.04 184.50,228.87 185.00,229.36 185.50,229.50 186.00,229.29 186.50,228.74 187.00,227.84 187.50,226.60 188.00,225.03 188.50,223.14 189.00,220.93 189.50,218.41 190.00,215.60 190.50,212.52 191.00,209.17 191.50,205.58 192.00,201.75 192.50,197.72 193.00,193.50 193.50,189.11 194.00,184.57 194.50,179.91 195.00,175.15 195.50,170.30 196.00,165.41 196.50,160.49 197.00,155.56 197.50,150.65 198.00,145.78 198.50,140.99 199.00,136.28 199.50,131.69 200.00,127.24 200.50,122.95 201.00,118.84 201.50,114.93 202.00,111.24 202.50,107.79 203.00,104.60 203.50,101.68 204.00,99.04 204.50,96.71 205.00,94.69 205.50,92.99 206.00,91.62 206.50,90.58 207.00,89.89 207.50,89.54 208.00,89.54 208.50,89.89 209.00,90.58 209.50,91.62 210.00,92.99 210.50,94.69 211.00,96.71 211.50,99.04 212.00,101.68 212.50,104.60 213.00,107.79 213.50,111.24 214.00,114.93 214.50,118.84 215.00,122.95 215.50,127.24 216.00,131.69 216.50,136.28 217.00,140.99 217.50,145.78 218.00,150.65 218.50,155.56 219.00,160.49 219.50,165.41 220.00,170.30 220.50,175.15 221.00,179.91 221.50,184.57 222.00,189.11 222.50,193.50 223.00,197.72 223.50,201.75 224.00,205.58 224.50,209.17 225.00,212.52 225.50,215.60 226.00,218.41 226.50,220.93 227.00,223.14 227.50,225.03 228.00,226.60 228.50,227.84 229.00,228.74 229.50,229.29 230.00,229.50 230.50,229.36 231.00,228.87 231.50,228.04 232.00,226.88 232.50,225.37 233.00,223.54 233.50,221.39 234.00,218.94 234.50,216.19 235.00,213.16 235.50,209.86 236.00,206.31 236.50,202.54 237.00,198.54 237.50,194.36 238.00,190.00 238.50,185.49 239.00,180.85 239.50,176.10 240.00,171.28 240.50,166.39 241.00,161.47 241.50,156.54 242.00,151.63 242.50,146.75 243.00,141.94 243.50,137.21 244.00,132.60 244.50,128.12 245.00,123.79 245.50,119.64 246.00,115.69 246.50,111.96 247.00,108.46 247.50,105.21 248.00,102.24 248.50,99.55 249.00,97.15 249.50,95.07 250.00,93.30 250.50,91.86 251.00,90.76 251.50,90.00 252.00,89.59 252.50,89.52 253.00,89.79 253.50,90.42 254.00,91.38 254.50,92.69 255.00,94.32 255.50,96.28 256.00,98.55 256.50,101.13 257.00,103.99 257.50,107.13 258.00,110.53 258.50,114.17 259.00,118.04 259.50,122.11 260.00,126.37 260.50,130.79 261.00,135.35 261.50,140.04 262.00,144.82 262.50,149.67 263.00,154.57 263.50,159.50 264.00,164.43 264.50,169.33 265.00,174.18 265.50,178.96 266.00,183.65 266.50,188.21 267.00,192.63 267.50,196.89 268.00,200.96 268.50,204.83 269.00,208.47 269.50,211.87 270.00,215.01 270.50,217.87 271.00,220.45 271.50,222.72 272.00,224.68 272.50,226.31 273.00,227.62 273.50,228.58 274.00,229.21 274.50,229.48 275.00,229.41 275.50,229.00 276.00,228.24 276.50,227.14 277.00,225.70 277.50,223.93 278.00,221.85 278.50,219.45 279.00,216.76 279.50,213.79 280.00,210.54 280.50,207.04 281.00,203.31 281.50,199.36 282.00,195.21 282.50,190.88 283.00,186.40 283.50,181.79 284.00,177.06 284.50,172.25 285.00,167.37 285.50,162.46 286.00,157.53 286.50,152.61 287.00,147.72 287.50,142.90 288.00,138.15 288.50,133.51 289.00,129.00 289.50,124.64 290.00,120.46 290.50,116.46 291.00,112.69 291.50,109.14 292.00,105.84 292.50,102.81 293.00,100.06 293.50,97.61 294.00,95.46 294.50,93.63 295.00,92.12 295.50,90.96 296.00,90.13 296.50,89.64 297.00,89.50 297.50,89.71 298.00,90.26 298.50,91.16 299.00,92.40 299.50,93.97 300.00,95.86 300.50,98.07 301.00,100.59 301.50,103.40 302.00,106.48 302.50,109.83 303.00,113.42 303.50,117.25 304.00,121.28 304.50,125.50 305.00,129.89 305.50,134.43 306.00,139.09 306.50,143.85 307.00,148.70 307.50,153.59 308.00,158.51 308.50,163.44 309.00,168.35 309.50,173.22 310.00,178.01 310.50,182.72 311.00,187.31 311.50,191.76 312.00,196.05 312.50,200.16 313.00,204.07 313.50,207.76 314.00,211.21 314.50,214.40 315.00,217.32 315.50,219.96 316.00,222.29 316.50,224.31 317.00,226.01 317.50,227.38 318.00,228.42 318.50,229.11 319.00,229.46 319.50,229.46 320.00,229.11 320.50,228.42 321.00,227.38 321.50,226.01 322.00,224.31 322.50,222.29 323.00,219.96 323.50,217.32 324.00,214.40 324.50,211.21 325.00,207.76 325.50,204.07 326.00,200.16 326.50,196.05 327.00,191.76 327.50,187.31 328.00,182.72 328.50,178.01 329.00,173.22 329.50,168.35 330.00,163.44 330.50,158.51 331.00,153.59 331.50,148.70 332.00,143.85 332.50,139.09 333.00,134.43 333.50,129.89 334.00,125.50 334.50,121.28 335.00,117.25 335.50,113.42 336.00,109.83 336.50,106.48 337.00,103.40 337.50,100.59 338.00,98.07 338.50,95.86 339.00,93.97 339.50,92.40 340.00,91.16 340.50,90.26 341.00,89.71 341.50,89.50 342.00,89.64 342.50,90.13 343.00,90.96 343.50,92.12 344.00,93.63 344.50,95.46 345.00,97.61 345.50,100.06 346.00,102.81 346.50,105.84 347.00,109.14 347.50,112.69 348.00,116.46 348.50,120.46 349.00,124.64 349.50,129.00 350.00,133.51 350.50,138.15 351.00,142.90 351.50,147.72 352.00,152.61 352.50,157.53 353.00,162.46 353.50,167.37 354.00,172.25 354.50,177.06 355.00,181.79 355.50,186.40 356.00,190.88 356.50,195.21 357.00,199.36 357.50,203.31 358.00,207.04 358.50,210.54 359.00,213.79 359.50,216.76 360.00,219.45 360.50,221.85 361.00,223.93 361.50,225.70 362.00,227.14 362.50,228.24 363.00,229.00 363.50,229.41 364.00,229.48 364.50,229.21 365.00,228.58 365.50,227.62 366.00,226.31 366.50,224.68 367.00,222.72 367.50,220.45 368.00,217.87 368.50,215.01 369.00,211.87 369.50,208.47 370.00,204.83 370.50,200.96 371.00,196.89 371.50,192.63 372.00,188.21 372.50,183.65 373.00,178.96 373.50,174.18 374.00,169.33 374.50,164.43 375.00,159.50 375.50,154.57 376.00,149.67 376.50,144.82 377.00,140.04 377.50,135.35 378.00,130.79 378.50,126.37 379.00,122.11 379.50,118.04 380.00,114.17 380.50,110.53 381.00,107.13 381.50,103.99 382.00,101.13 382.50,98.55 383.00,96.28 383.50,94.32 384.00,92.69 384.50,91.38 385.00,90.42 385.50,89.79 386.00,89.52 386.50,89.59 387.00,90.00 387.50,90.76 388.00,91.86 388.50,93.30 389.00,95.07 389.50,97.15 390.00,99.55 390.50,102.24 391.00,105.21 391.50,108.46 392.00,111.96 392.50,115.69 393.00,119.64 393.50,123.79 394.00,128.12 394.50,132.60 395.00,137.21 395.50,141.94 396.00,146.75 396.50,151.63 397.00,156.54 397.50,161.47 398.00,166.39 398.50,171.28 399.00,176.10 399.50,180.85 400.00,185.49 400.50,190.00 401.00,194.36 401.50,198.54 402.00,202.54 402.50,206.31 403.00,209.86 403.50,213.16 404.00,216.19 404.50,218.94 405.00,221.39 405.50,223.54 406.00,225.37 406.50,226.88 407.00,228.04 407.50,228.87 408.00,229.36 408.50,229.50 409.00,229.29 409.50,228.74 410.00,227.84 410.50,226.60 411.00,225.03 411.50,223.14 412.00,220.93 412.50,218.41 413.00,215.60 413.50,212.52 414.00,209.17 414.50,205.58 415.00,201.75 415.50,197.72 416.00,193.50 416.50,189.11 417.00,184.57 417.50,179.91 418.00,175.15 418.50,170.30 419.00,165.41 419.50,160.49 420.00,155.56 420.50,150.65 421.00,145.78 421.50,140.99 422.00,136.28 422.50,131.69 423.00,127.24 423.50,122.95 424.00,118.84 424.50,114.93 425.00,111.24 425.50,107.79 426.00,104.60 426.50,101.68 427.00,99.04 427.50,96.71 428.00,94.69 428.50,92.99 429.00,91.62 429.50,90.58 430.00,89.89 430.50,89.54 431.00,89.54 431.50,89.89 432.00,90.58 432.50,91.62 433.00,92.99 433.50,94.69 434.00,96.71 434.50,99.04 435.00,101.68 435.50,104.60 436.00,107.79 436.50,111.24 437.00,114.93 437.50,118.84 438.00,122.95 438.50,127.24 439.00,131.69 439.50,136.28 440.00,140.99 440.50,145.78 441.00,150.65 441.50,155.56 442.00,160.49 442.50,165.41 443.00,170.30 443.50,175.15 444.00,179.91 444.50,184.57 445.00,189.11 445.50,193.50 446.00,197.72 446.50,201.75 447.00,205.58 447.50,209.17 448.00,212.52 448.50,215.60 449.00,218.41 449.50,220.93 450.00,223.14 450.50,225.03 451.00,226.60 451.50,227.84 452.00,228.74 452.50,229.29 453.00,229.50 453.50,229.36 454.00,228.87 454.50,228.04 455.00,226.88 455.50,225.37 456.00,223.54 456.50,221.39 457.00,218.94 457.50,216.19 458.00,213.16 458.50,209.86 459.00,206.31 459.50,202.54 460.00,198.54 460.50,194.36 461.00,190.00 461.50,185.49 462.00,180.85 462.50,176.10 463.00,171.28 463.50,166.39 464.00,161.47 464.50,156.54 465.00,151.63 465.50,146.75 466.00,141.94 466.50,137.21 467.00,132.60 467.50,128.12 468.00,123.79 468.50,119.64 469.00,115.69 469.50,111.96 470.00,108.46 470.50,105.21 471.00,102.24 471.50,99.55 472.00,97.15 472.50,95.07 473.00,93.30 473.50,91.86 474.00,90.76 474.50,90.00 475.00,89.59 475.50,89.52 476.00,89.79 476.50,90.42 477.00,91.38 477.50,92.69 478.00,94.32 478.50,96.28 479.00,98.55 479.50,101.13 480.00,103.99 480.50,107.13 481.00,110.53 481.50,114.17 482.00,118.04 482.50,122.11 483.00,126.37 483.50,130.79 484.00,135.35 484.50,140.04 485.00,144.82 485.50,149.67 486.00,154.57 486.50,159.50" stroke="#0A6E0A" stroke-width="0.95" fill="none" stroke-linejoin="round"/>
<polyline points="40.50,154.07 41.00,154.48 41.50,154.92 42.00,155.38 42.50,155.86 43.00,156.37 43.50,156.88 44.00,157.42 44.50,157.96 45.00,158.52 45.50,159.07 46.00,159.64 46.50,160.20 47.00,160.76 47.50,161.32 48.00,161.87 48.50,162.40 49.00,162.93 49.50,163.44 50.00,163.93 50.50,164.40 51.00,164.84 51.50,165.27 52.00,165.66 52.50,166.02 53.00,166.36 53.50,166.66 54.00,166.93 54.50,167.16 55.00,167.35 55.50,167.51 56.00,167.63 56.50,167.71 57.00,167.75 57.50,167.75 58.00,167.71 58.50,167.63 59.00,167.51 59.50,167.35 60.00,167.16 60.50,166.93 61.00,166.66 61.50,166.36 62.00,166.02 62.50,165.66 63.00,165.27 63.50,164.84 64.00,164.40 64.50,163.93 65.00,163.44 65.50,162.93 66.00,162.40 66.50,161.87 67.00,161.32 67.50,160.76 68.00,160.20 68.50,159.64 69.00,159.07 69.50,158.52 70.00,157.96 70.50,157.42 71.00,156.88 71.50,156.37 72.00,155.86 72.50,155.38 73.00,154.92 73.50,154.48 74.00,154.07 74.50,153.69 75.00,153.34 75.50,153.02 76.00,152.73 76.50,152.48 77.00,152.26 77.50,152.08 78.00,151.94 78.50,151.84 79.00,151.77 79.50,151.75 80.00,151.77 80.50,151.82 81.00,151.92 81.50,152.05 82.00,152.22 82.50,152.43 83.00,152.68 83.50,152.96 84.00,153.27 84.50,153.62 85.00,153.99 85.50,154.40 86.00,154.83 86.50,155.29 87.00,155.77 87.50,156.26 88.00,156.78 88.50,157.31 89.00,157.85 89.50,158.40 90.00,158.96 90.50,159.52 91.00,160.09 91.50,160.65 92.00,161.21 92.50,161.76 93.00,162.30 93.50,162.82 94.00,163.34 94.50,163.83 95.00,164.31 95.50,164.76 96.00,165.18 96.50,165.58 97.00,165.95 97.50,166.29 98.00,166.60 98.50,166.88 99.00,167.11 99.50,167.32 100.00,167.48 100.50,167.61 101.00,167.69 101.50,167.74 102.00,167.75 102.50,167.72 103.00,167.65 103.50,167.53 104.00,167.39 104.50,167.20 105.00,166.98 105.50,166.72 106.00,166.42 106.50,166.09 107.00,165.74 107.50,165.35 108.00,164.93 108.50,164.49 109.00,164.02 109.50,163.54 110.00,163.03 110.50,162.51 111.00,161.97 111.50,161.43 112.00,160.87 112.50,160.31 113.00,159.75 113.50,159.19 114.00,158.63 114.50,158.07 115.00,157.53 115.50,156.99 116.00,156.47 116.50,155.96 117.00,155.48 117.50,155.01 118.00,154.57 118.50,154.15 119.00,153.76 119.50,153.41 120.00,153.08 120.50,152.78 121.00,152.52 121.50,152.30 122.00,152.11 122.50,151.97 123.00,151.85 123.50,151.78 124.00,151.75 124.50,151.76 125.00,151.81 125.50,151.89 126.00,152.02 126.50,152.18 127.00,152.39 127.50,152.62 128.00,152.90 128.50,153.21 129.00,153.55 129.50,153.92 130.00,154.32 130.50,154.74 131.00,155.19 131.50,155.67 132.00,156.16 132.50,156.68 133.00,157.20 133.50,157.74 134.00,158.29 134.50,158.85 135.00,159.41 135.50,159.98 136.00,160.54 136.50,161.10 137.00,161.65 137.50,162.19 138.00,162.72 138.50,163.24 139.00,163.73 139.50,164.21 140.00,164.67 140.50,165.10 141.00,165.51 141.50,165.88 142.00,166.23 142.50,166.54 143.00,166.82 143.50,167.07 144.00,167.28 144.50,167.45 145.00,167.58 145.50,167.68 146.00,167.73 146.50,167.75 147.00,167.73 147.50,167.66 148.00,167.56 148.50,167.42 149.00,167.24 149.50,167.02 150.00,166.77 150.50,166.48 151.00,166.16 151.50,165.81 152.00,165.43 152.50,165.02 153.00,164.58 153.50,164.12 154.00,163.64 154.50,163.13 155.00,162.62 155.50,162.08 156.00,161.54 156.50,160.98 157.00,160.43 157.50,159.86 158.00,159.30 158.50,158.74 159.00,158.18 159.50,157.63 160.00,157.10 160.50,156.57 161.00,156.06 161.50,155.57 162.00,155.10 162.50,154.66 163.00,154.23 163.50,153.84 164.00,153.48 164.50,153.14 165.00,152.84 165.50,152.57 166.00,152.34 166.50,152.15 167.00,151.99 167.50,151.87 168.00,151.79 168.50,151.75 169.00,151.75 169.50,151.79 170.00,151.87 170.50,151.99 171.00,152.15 171.50,152.34 172.00,152.57 172.50,152.84 173.00,153.14 173.50,153.48 174.00,153.84 174.50,154.23 175.00,154.66 175.50,155.10 176.00,155.57 176.50,156.06 177.00,156.57 177.50,157.10 178.00,157.63 178.50,158.18 179.00,158.74 179.50,159.30 180.00,159.86 180.50,160.43 181.00,160.98 181.50,161.54 182.00,162.08 182.50,162.62 183.00,163.13 183.50,163.64 184.00,164.12 184.50,164.58 185.00,165.02 185.50,165.43 186.00,165.81 186.50,166.16 187.00,166.48 187.50,166.77 188.00,167.02 188.50,167.24 189.00,167.42 189.50,167.56 190.00,167.66 190.50,167.73 191.00,167.75 191.50,167.73 192.00,167.68 192.50,167.58 193.00,167.45 193.50,167.28 194.00,167.07 194.50,166.82 195.00,166.54 195.50,166.23 196.00,165.88 196.50,165.51 197.00,165.10 197.50,164.67 198.00,164.21 198.50,163.73 199.00,163.24 199.50,162.72 200.00,162.19 200.50,161.65 201.00,161.10 201.50,160.54 202.00,159.98 202.50,159.41 203.00,158.85 203.50,158.29 204.00,157.74 204.50,157.20 205.00,156.68 205.50,156.16 206.00,155.67 206.50,155.19 207.00,154.74 207.50,154.32 208.00,153.92 208.50,153.55 209.00,153.21 209.50,152.90 210.00,152.62 210.50,152.39 211.00,152.18 211.50,152.02 212.00,151.89 212.50,151.81 213.00,151.76 213.50,151.75 214.00,151.78 214.50,151.85 215.00,151.97 215.50,152.11 216.00,152.30 216.50,152.52 217.00,152.78 217.50,153.08 218.00,153.41 218.50,153.76 219.00,154.15 219.50,154.57 220.00,155.01 220.50,155.48 221.00,155.96 221.50,156.47 222.00,156.99 222.50,157.53 223.00,158.07 223.50,158.63 224.00,159.19 224.50,159.75 225.00,160.31 225.50,160.87 226.00,161.43 226.50,161.97 227.00,162.51 227.50,163.03 228.00,163.54 228.50,164.02 229.00,164.49 229.50,164.93 230.00,165.35 230.50,165.74 231.00,166.09 231.50,166.42 232.00,166.72 232.50,166.98 233.00,167.20 233.50,167.39 234.00,167.53 234.50,167.65 235.00,167.72 235.50,167.75 236.00,167.74 236.50,167.69 237.00,167.61 237.50,167.48 238.00,167.32 238.50,167.11 239.00,166.88 239.50,166.60 240.00,166.29 240.50,165.95 241.00,165.58 241.50,165.18 242.00,164.76 242.50,164.31 243.00,163.83 243.50,163.34 244.00,162.82 244.50,162.30 245.00,161.76 245.50,161.21 246.00,160.65 246.50,160.09 247.00,159.52 247.50,158.96 248.00,158.40 248.50,157.85 249.00,157.31 249.50,156.78 250.00,156.26 250.50,155.77 251.00,155.29 251.50,154.83 252.00,154.40 252.50,153.99 253.00,153.62 253.50,153.27 254.00,152.96 254.50,152.68 255.00,152.43 255.50,152.22 256.00,152.05 256.50,151.92 257.00,151.82 257.50,151.77 258.00,151.75 258.50,151.77 259.00,151.84 259.50,151.94 260.00,152.08 260.50,152.26 261.00,152.48 261.50,152.73 262.00,153.02 262.50,153.34 263.00,153.69 263.50,154.07 264.00,154.48 264.50,154.92 265.00,155.38 265.50,155.86 266.00,156.37 266.50,156.88 267.00,157.42 267.50,157.96 268.00,158.52 268.50,159.07 269.00,159.64 269.50,160.20 270.00,160.76 270.50,161.32 271.00,161.87 271.50,162.40 272.00,162.93 272.50,163.44 273.00,163.93 273.50,164.40 274.00,164.84 274.50,165.27 275.00,165.66 275.50,166.02 276.00,166.36 276.50,166.66 277.00,166.93 277.50,167.16 278.00,167.35 278.50,167.51 279.00,167.63 279.50,167.71 280.00,167.75 280.50,167.75 281.00,167.71 281.50,167.63 282.00,167.51 282.50,167.35 283.00,167.16 283.50,166.93 284.00,166.66 284.50,166.36 285.00,166.02 285.50,165.66 286.00,165.27 286.50,164.84 287.00,164.40 287.50,163.93 288.00,163.44 288.50,162.93 289.00,162.40 289.50,161.87 290.00,161.32 290.50,160.76 291.00,160.20 291.50,159.64 292.00,159.07 292.50,158.52 293.00,157.96 293.50,157.42 294.00,156.88 294.50,156.37 295.00,155.86 295.50,155.38 296.00,154.92 296.50,154.48 297.00,154.07 297.50,153.69 298.00,153.34 298.50,153.02 299.00,152.73 299.50,152.48 300.00,152.26 300.50,152.08 301.00,151.94 301.50,151.84 302.00,151.77 302.50,151.75 303.00,151.77 303.50,151.82 304.00,151.92 304.50,152.05 305.00,152.22 305.50,152.43 306.00,152.68 306.50,152.96 307.00,153.27 307.50,153.62 308.00,153.99 308.50,154.40 309.00,154.83 309.50,155.29 310.00,155.77 310.50,156.26 311.00,156.78 311.50,157.31 312.00,157.85 312.50,158.40 313.00,158.96 313.50,159.52 314.00,160.09 314.50,160.65 315.00,161.21 315.50,161.76 316.00,162.30 316.50,162.82 317.00,163.34 317.50,163.83 318.00,164.31 318.50,164.76 319.00,165.18 319.50,165.58 320.00,165.95 320.50,166.29 321.00,166.60 321.50,166.88 322.00,167.11 322.50,167.32 323.00,167.48 323.50,167.61 324.00,167.69 324.50,167.74 325.00,167.75 325.50,167.72 326.00,167.65 326.50,167.53 327.00,167.39 327.50,167.20 328.00,166.98 328.50,166.72 329.00,166.42 329.50,166.09 330.00,165.74 330.50,165.35 331.00,164.93 331.50,164.49 332.00,164.02 332.50,163.54 333.00,163.03 333.50,162.51 334.00,161.97 334.50,161.43 335.00,160.87 335.50,160.31 336.00,159.75 336.50,159.19 337.00,158.63 337.50,158.07 338.00,157.53 338.50,156.99 339.00,156.47 339.50,155.96 340.00,155.48 340.50,155.01 341.00,154.57 341.50,154.15 342.00,153.76 342.50,153.41 343.00,153.08 343.50,152.78 344.00,152.52 344.50,152.30 345.00,152.11 345.50,151.97 346.00,151.85 346.50,151.78 347.00,151.75 347.50,151.76 348.00,151.81 348.50,151.89 349.00,152.02 349.50,152.18 350.00,152.39 350.50,152.62 351.00,152.90 351.50,153.21 352.00,153.55 352.50,153.92 353.00,154.32 353.50,154.74 354.00,155.19 354.50,155.67 355.00,156.16 355.50,156.68 356.00,157.20 356.50,157.74 357.00,158.29 357.50,158.85 358.00,159.41 358.50,159.98 359.00,160.54 359.50,161.10 360.00,161.65 360.50,162.19 361.00,162.72 361.50,163.24 362.00,163.73 362.50,164.21 363.00,164.67 363.50,165.10 364.00,165.51 364.50,165.88 365.00,166.23 365.50,166.54 366.00,166.82 366.50,167.07 367.00,167.28 367.50,167.45 368.00,167.58 368.50,167.68 369.00,167.73 369.50,167.75 370.00,167.73 370.50,167.66 371.00,167.56 371.50,167.42 372.00,167.24 372.50,167.02 373.00,166.77 373.50,166.48 374.00,166.16 374.50,165.81 375.00,165.43 375.50,165.02 376.00,164.58 376.50,164.12 377.00,163.64 377.50,163.13 378.00,162.62 378.50,162.08 379.00,161.54 379.50,160.98 380.00,160.43 380.50,159.86 381.00,159.30 381.50,158.74 382.00,158.18 382.50,157.63 383.00,157.10 383.50,156.57 384.00,156.06 384.50,155.57 385.00,155.10 385.50,154.66 386.00,154.23 386.50,153.84 387.00,153.48 387.50,153.14 388.00,152.84 388.50,152.57 389.00,152.34 389.50,152.15 390.00,151.99 390.50,151.87 391.00,151.79 391.50,151.75 392.00,151.75 392.50,151.79 393.00,151.87 393.50,151.99 394.00,152.15 394.50,152.34 395.00,152.57 395.50,152.84 396.00,153.14 396.50,153.48 397.00,153.84 397.50,154.23 398.00,154.66 398.50,155.10 399.00,155.57 399.50,156.06 400.00,156.57 400.50,157.10 401.00,157.63 401.50,158.18 402.00,158.74 402.50,159.30 403.00,159.86 403.50,160.43 404.00,160.98 404.50,161.54 405.00,162.08 405.50,162.62 406.00,163.13 406.50,163.64 407.00,164.12 407.50,164.58 408.00,165.02 408.50,165.43 409.00,165.81 409.50,166.16 410.00,166.48 410.50,166.77 411.00,167.02 411.50,167.24 412.00,167.42 412.50,167.56 413.00,167.66 413.50,167.73 414.00,167.75 414.50,167.73 415.00,167.68 415.50,167.58 416.00,167.45 416.50,167.28 417.00,167.07 417.50,166.82 418.00,166.54 418.50,166.23 419.00,165.88 419.50,165.51 420.00,165.10 420.50,164.67 421.00,164.21 421.50,163.73 422.00,163.24 422.50,162.72 423.00,162.19 423.50,161.65 424.00,161.10 424.50,160.54 425.00,159.98 425.50,159.41 426.00,158.85 426.50,158.29 427.00,157.74 427.50,157.20 428.00,156.68 428.50,156.16 429.00,155.67 429.50,155.19 430.00,154.74 430.50,154.32 431.00,153.92 431.50,153.55 432.00,153.21 432.50,152.90 433.00,152.62 433.50,152.39 434.00,152.18 434.50,152.02 435.00,151.89 435.50,151.81 436.00,151.76 436.50,151.75 437.00,151.78 437.50,151.85 438.00,151.97 438.50,152.11 439.00,152.30 439.50,152.52 440.00,152.78 440.50,153.08 441.00,153.41 441.50,153.76 442.00,154.15 442.50,154.57 443.00,155.01 443.50,155.48 444.00,155.96 444.50,156.47 445.00,156.99 445.50,157.53 446.00,158.07 446.50,158.63 447.00,159.19 447.50,159.75 448.00,160.31 448.50,160.87 449.00,161.43 449.50,161.97 450.00,162.51 450.50,163.03 451.00,163.54 451.50,164.02 452.00,164.49 452.50,164.93 453.00,165.35 453.50,165.74 454.00,166.09 454.50,166.42 455.00,166.72 455.50,166.98 456.00,167.20 456.50,167.39 457.00,167.53 457.50,167.65 458.00,167.72 458.50,167.75 459.00,167.74 459.50,167.69 460.00,167.61 460.50,167.48 461.00,167.32 461.50,167.11 462.00,166.88 462.50,166.60 463.00,166.29 463.50,165.95 464.00,165.58 464.50,165.18 465.00,164.76 465.50,164.31 466.00,163.83 466.50,163.34 467.00,162.82 467.50,162.30 468.00,161.76 468.50,161.21 469.00,160.65 469.50,160.09 470.00,159.52 470.50,158.96 471.00,158.40 471.50,157.85 472.00,157.31 472.50,156.78 473.00,156.26 473.50,155.77 474.00,155.29 474.50,154.83 475.00,154.40 475.50,153.99 476.00,153.62 476.50,153.27 477.00,152.96 477.50,152.68 478.00,152.43 478.50,152.22 479.00,152.05 479.50,151.92 480.00,151.82 480.50,151.77 481.00,151.75 481.50,151.77 482.00,151.84 482.50,151.94 483.00,152.08 483.50,152.26 484.00,152.48 484.50,152.73 485.00,153.02 485.50,153.34 486.00,153.69 486.50,154.07" stroke="#A010A8" stroke-width="1.1" fill="none" stroke-linejoin="round"/>
<polyline points="49.45,256.39 49.95,255.11 50.45,254.15 50.95,253.53 51.45,253.23 51.95,253.26 52.45,253.62 52.95,254.32 53.45,255.34" stroke="#1028C8" stroke-width="1.0" fill="none" stroke-linejoin="round"/>
<polyline points="71.75,383.81 72.25,385.09 72.75,386.05 73.25,386.67 73.75,386.97 74.25,386.94 74.75,386.58 75.25,385.88 75.75,384.86" stroke="#1028C8" stroke-width="1.0" fill="none" stroke-linejoin="round"/>
<polyline points="94.05,256.39 94.55,255.11 95.05,254.15 95.55,253.53 96.05,253.23 96.55,253.26 97.05,253.62 97.55,254.32 98.05,255.34" stroke="#1028C8" stroke-width="1.0" fill="none" stroke-linejoin="round"/>
<polyline points="116.35,383.81 116.85,385.09 117.35,386.05 117.85,386.67 118.35,386.97 118.85,386.94 119.35,386.58 119.85,385.88 120.35,384.86" stroke="#1028C8" stroke-width="1.0" fill="none" stroke-linejoin="round"/>
<polyline points="138.65,256.39 139.15,255.11 139.65,254.15 140.15,253.53 140.65,253.23 141.15,253.26 141.65,253.62 142.15,254.32 142.65,255.34" stroke="#1028C8" stroke-width="1.0" fill="none" stroke-linejoin="round"/>
<polyline points="160.95,383.81 161.45,385.09 161.95,386.05 162.45,386.67 162.95,386.97 163.45,386.94 163.95,386.58 164.45,385.88 164.95,384.86" stroke="#1028C8" stroke-width="1.0" fill="none" stroke-linejoin="round"/>
<polyline points="183.25,256.39 183.75,255.11 184.25,254.15 184.75,253.53 185.25,253.23 185.75,253.26 186.25,253.62 186.75,254.32 187.25,255.34" stroke="#1028C8" stroke-width="1.0" fill="none" stroke-linejoin="round"/>
<polyline points="205.55,383.81 206.05,385.09 206.55,386.05 207.05,386.67 207.55,386.97 208.05,386.94 208.55,386.58 209.05,385.88 209.55,384.86" stroke="#1028C8" stroke-width="1.0" fill="none" stroke-linejoin="round"/>
<polyline points="227.85,256.39 228.35,255.11 228.85,254.15 229.35,253.53 229.85,253.23 230.35,253.26 230.85,253.62 231.35,254.32 231.85,255.34" stroke="#1028C8" stroke-width="1.0" fill="none" stroke-linejoin="round"/>
<polyline points="250.15,383.81 250.65,385.09 251.15,386.05 251.65,386.67 252.15,386.97 252.65,386.94 253.15,386.58 253.65,385.88 254.15,384.86" stroke="#1028C8" stroke-width="1.0" fill="none" stroke-linejoin="round"/>
<polyline points="272.45,256.39 272.95,255.11 273.45,254.15 273.95,253.53 274.45,253.23 274.95,253.26 275.45,253.62 275.95,254.32 276.45,255.34" stroke="#1028C8" stroke-width="1.0" fill="none" stroke-linejoin="round"/>
<polyline points="294.75,383.81 295.25,385.09 295.75,386.05 296.25,386.67 296.75,386.97 297.25,386.94 297.75,386.58 298.25,385.88 298.75,384.86" stroke="#1028C8" stroke-width="1.0" fill="none" stroke-linejoin="round"/>
<polyline points="317.05,256.39 317.55,255.11 318.05,254.15 318.55,253.53 319.05,253.23 319.55,253.26 320.05,253.62 320.55,254.32 321.05,255.34" stroke="#1028C8" stroke-width="1.0" fill="none" stroke-linejoin="round"/>
<polyline points="339.35,383.81 339.85,385.09 340.35,386.05 340.85,386.67 341.35,386.97 341.85,386.94 342.35,386.58 342.85,385.88 343.35,384.86" stroke="#1028C8" stroke-width="1.0" fill="none" stroke-linejoin="round"/>
<polyline points="361.65,256.39 362.15,255.11 362.65,254.15 363.15,253.53 363.65,253.23 364.15,253.26 364.65,253.62 365.15,254.32 365.65,255.34" stroke="#1028C8" stroke-width="1.0" fill="none" stroke-linejoin="round"/>
<polyline points="383.95,383.81 384.45,385.09 384.95,386.05 385.45,386.67 385.95,386.97 386.45,386.94 386.95,386.58 387.45,385.88 387.95,384.86" stroke="#1028C8" stroke-width="1.0" fill="none" stroke-linejoin="round"/>
<polyline points="406.25,256.39 406.75,255.11 407.25,254.15 407.75,253.53 408.25,253.23 408.75,253.26 409.25,253.62 409.75,254.32 410.25,255.34" stroke="#1028C8" stroke-width="1.0" fill="none" stroke-linejoin="round"/>
<polyline points="428.55,383.81 429.05,385.09 429.55,386.05 430.05,386.67 430.55,386.97 431.05,386.94 431.55,386.58 432.05,385.88 432.55,384.86" stroke="#1028C8" stroke-width="1.0" fill="none" stroke-linejoin="round"/>
<polyline points="450.85,256.39 451.35,255.11 451.85,254.15 452.35,253.53 452.85,253.23 453.35,253.26 453.85,253.62 454.35,254.32 454.85,255.34" stroke="#1028C8" stroke-width="1.0" fill="none" stroke-linejoin="round"/>
<polyline points="473.15,383.81 473.65,385.09 474.15,386.05 474.65,386.67 475.15,386.97 475.65,386.94 476.15,386.58 476.65,385.88 477.15,384.86" stroke="#1028C8" stroke-width="1.0" fill="none" stroke-linejoin="round"/>
<polyline points="40.50,320.10 41.00,315.43 41.50,310.78 42.00,306.17 42.50,301.64 43.00,297.19 43.50,292.86 44.00,288.67 44.50,284.63 45.00,280.77 45.50,277.10 46.00,273.65 46.50,270.42 47.00,267.45 47.50,264.73 48.00,262.29 48.50,260.13 49.00,258.27 49.50,256.72 50.00,255.49 50.50,254.57 51.00,253.98 51.50,253.71 52.00,253.78 52.50,254.18 53.00,254.90 53.50,255.94 54.00,257.31 54.50,258.98 55.00,260.96 55.50,263.23 56.00,265.78 56.50,268.61 57.00,271.68 57.50,275.00 58.00,278.54 58.50,282.29 59.00,286.23 59.50,290.33 60.00,294.58 60.50,298.96 61.00,303.44 61.50,308.01 62.00,312.63 62.50,317.29 63.00,321.97 63.50,326.64 64.00,331.27 64.50,335.85 65.00,340.35 65.50,344.75 66.00,349.03 66.50,353.16 67.00,357.14 67.50,360.92 68.00,364.51 68.50,367.87 69.00,371.00 69.50,373.87 70.00,376.48 70.50,378.81 71.00,380.85 71.50,382.58 72.00,384.01 72.50,385.12 73.00,385.91 73.50,386.37 74.00,386.50 74.50,386.30 75.00,385.77 75.50,384.92 76.00,383.75 76.50,382.26 77.00,380.46 77.50,378.37 78.00,375.98 78.50,373.32 79.00,370.39 79.50,367.22 80.00,363.81 80.50,360.18 81.00,356.36 81.50,352.35 82.00,348.19 82.50,343.88 83.00,339.46 83.50,334.94 84.00,330.35 84.50,325.71 85.00,321.04 85.50,316.36 86.00,311.70 86.50,307.09 87.00,302.54 87.50,298.07 88.00,293.72 88.50,289.50 89.00,285.43 89.50,281.53 90.00,277.82 90.50,274.32 91.00,271.05 91.50,268.02 92.00,265.25 92.50,262.75 93.00,260.54 93.50,258.62 94.00,257.01 94.50,255.71 95.00,254.73 95.50,254.07 96.00,253.74 96.50,253.74 97.00,254.07 97.50,254.73 98.00,255.71 98.50,257.01 99.00,258.62 99.50,260.54 100.00,262.75 100.50,265.25 101.00,268.02 101.50,271.05 102.00,274.32 102.50,277.82 103.00,281.53 103.50,285.43 104.00,289.50 104.50,293.72 105.00,298.07 105.50,302.54 106.00,307.09 106.50,311.70 107.00,316.36 107.50,321.04 108.00,325.71 108.50,330.35 109.00,334.94 109.50,339.46 110.00,343.88 110.50,348.19 111.00,352.35 111.50,356.36 112.00,360.18 112.50,363.81 113.00,367.22 113.50,370.39 114.00,373.32 114.50,375.98 115.00,378.37 115.50,380.46 116.00,382.26 116.50,383.75 117.00,384.92 117.50,385.77 118.00,386.30 118.50,386.50 119.00,386.37 119.50,385.91 120.00,385.12 120.50,384.01 121.00,382.58 121.50,380.85 122.00,378.81 122.50,376.48 123.00,373.87 123.50,371.00 124.00,367.87 124.50,364.51 125.00,360.92 125.50,357.14 126.00,353.16 126.50,349.03 127.00,344.75 127.50,340.35 128.00,335.85 128.50,331.27 129.00,326.64 129.50,321.97 130.00,317.29 130.50,312.63 131.00,308.01 131.50,303.44 132.00,298.96 132.50,294.58 133.00,290.33 133.50,286.23 134.00,282.29 134.50,278.54 135.00,275.00 135.50,271.68 136.00,268.61 136.50,265.78 137.00,263.23 137.50,260.96 138.00,258.98 138.50,257.31 139.00,255.94 139.50,254.90 140.00,254.18 140.50,253.78 141.00,253.71 141.50,253.98 142.00,254.57 142.50,255.49 143.00,256.72 143.50,258.27 144.00,260.13 144.50,262.29 145.00,264.73 145.50,267.45 146.00,270.42 146.50,273.65 147.00,277.10 147.50,280.77 148.00,284.63 148.50,288.67 149.00,292.86 149.50,297.19 150.00,301.64 150.50,306.17 151.00,310.78 151.50,315.43 152.00,320.10 152.50,324.77 153.00,329.42 153.50,334.03 154.00,338.56 154.50,343.01 155.00,347.34 155.50,351.53 156.00,355.57 156.50,359.43 157.00,363.10 157.50,366.55 158.00,369.78 158.50,372.75 159.00,375.47 159.50,377.91 160.00,380.07 160.50,381.93 161.00,383.48 161.50,384.71 162.00,385.63 162.50,386.22 163.00,386.49 163.50,386.42 164.00,386.02 164.50,385.30 165.00,384.26 165.50,382.89 166.00,381.22 166.50,379.24 167.00,376.97 167.50,374.42 168.00,371.59 168.50,368.52 169.00,365.20 169.50,361.66 170.00,357.91 170.50,353.97 171.00,349.87 171.50,345.62 172.00,341.24 172.50,336.76 173.00,332.19 173.50,327.57 174.00,322.91 174.50,318.23 175.00,313.56 175.50,308.93 176.00,304.35 176.50,299.85 177.00,295.45 177.50,291.17 178.00,287.04 178.50,283.06 179.00,279.28 179.50,275.69 180.00,272.33 180.50,269.20 181.00,266.33 181.50,263.72 182.00,261.39 182.50,259.35 183.00,257.62 183.50,256.19 184.00,255.08 184.50,254.29 185.00,253.83 185.50,253.70 186.00,253.90 186.50,254.43 187.00,255.28 187.50,256.45 188.00,257.94 188.50,259.74 189.00,261.83 189.50,264.22 190.00,266.88 190.50,269.81 191.00,272.98 191.50,276.39 192.00,280.02 192.50,283.84 193.00,287.85 193.50,292.01 194.00,296.32 194.50,300.74 195.00,305.26 195.50,309.85 196.00,314.49 196.50,319.16 197.00,323.84 197.50,328.50 198.00,333.11 198.50,337.66 199.00,342.13 199.50,346.48 200.00,350.70 200.50,354.77 201.00,358.67 201.50,362.38 202.00,365.88 202.50,369.15 203.00,372.18 203.50,374.95 204.00,377.45 204.50,379.66 205.00,381.58 205.50,383.19 206.00,384.49 206.50,385.47 207.00,386.13 207.50,386.46 208.00,386.46 208.50,386.13 209.00,385.47 209.50,384.49 210.00,383.19 210.50,381.58 211.00,379.66 211.50,377.45 212.00,374.95 212.50,372.18 213.00,369.15 213.50,365.88 214.00,362.38 214.50,358.67 215.00,354.77 215.50,350.70 216.00,346.48 216.50,342.13 217.00,337.66 217.50,333.11 218.00,328.50 218.50,323.84 219.00,319.16 219.50,314.49 220.00,309.85 220.50,305.26 221.00,300.74 221.50,296.32 222.00,292.01 222.50,287.85 223.00,283.84 223.50,280.02 224.00,276.39 224.50,272.98 225.00,269.81 225.50,266.88 226.00,264.22 226.50,261.83 227.00,259.74 227.50,257.94 228.00,256.45 228.50,255.28 229.00,254.43 229.50,253.90 230.00,253.70 230.50,253.83 231.00,254.29 231.50,255.08 232.00,256.19 232.50,257.62 233.00,259.35 233.50,261.39 234.00,263.72 234.50,266.33 235.00,269.20 235.50,272.33 236.00,275.69 236.50,279.28 237.00,283.06 237.50,287.04 238.00,291.17 238.50,295.45 239.00,299.85 239.50,304.35 240.00,308.93 240.50,313.56 241.00,318.23 241.50,322.91 242.00,327.57 242.50,332.19 243.00,336.76 243.50,341.24 244.00,345.62 244.50,349.87 245.00,353.97 245.50,357.91 246.00,361.66 246.50,365.20 247.00,368.52 247.50,371.59 248.00,374.42 248.50,376.97 249.00,379.24 249.50,381.22 250.00,382.89 250.50,384.26 251.00,385.30 251.50,386.02 252.00,386.42 252.50,386.49 253.00,386.22 253.50,385.63 254.00,384.71 254.50,383.48 255.00,381.93 255.50,380.07 256.00,377.91 256.50,375.47 257.00,372.75 257.50,369.78 258.00,366.55 258.50,363.10 259.00,359.43 259.50,355.57 260.00,351.53 260.50,347.34 261.00,343.01 261.50,338.56 262.00,334.03 262.50,329.42 263.00,324.77 263.50,320.10 264.00,315.43 264.50,310.78 265.00,306.17 265.50,301.64 266.00,297.19 266.50,292.86 267.00,288.67 267.50,284.63 268.00,280.77 268.50,277.10 269.00,273.65 269.50,270.42 270.00,267.45 270.50,264.73 271.00,262.29 271.50,260.13 272.00,258.27 272.50,256.72 273.00,255.49 273.50,254.57 274.00,253.98 274.50,253.71 275.00,253.78 275.50,254.18 276.00,254.90 276.50,255.94 277.00,257.31 277.50,258.98 278.00,260.96 278.50,263.23 279.00,265.78 279.50,268.61 280.00,271.68 280.50,275.00 281.00,278.54 281.50,282.29 282.00,286.23 282.50,290.33 283.00,294.58 283.50,298.96 284.00,303.44 284.50,308.01 285.00,312.63 285.50,317.29 286.00,321.97 286.50,326.64 287.00,331.27 287.50,335.85 288.00,340.35 288.50,344.75 289.00,349.03 289.50,353.16 290.00,357.14 290.50,360.92 291.00,364.51 291.50,367.87 292.00,371.00 292.50,373.87 293.00,376.48 293.50,378.81 294.00,380.85 294.50,382.58 295.00,384.01 295.50,385.12 296.00,385.91 296.50,386.37 297.00,386.50 297.50,386.30 298.00,385.77 298.50,384.92 299.00,383.75 299.50,382.26 300.00,380.46 300.50,378.37 301.00,375.98 301.50,373.32 302.00,370.39 302.50,367.22 303.00,363.81 303.50,360.18 304.00,356.36 304.50,352.35 305.00,348.19 305.50,343.88 306.00,339.46 306.50,334.94 307.00,330.35 307.50,325.71 308.00,321.04 308.50,316.36 309.00,311.70 309.50,307.09 310.00,302.54 310.50,298.07 311.00,293.72 311.50,289.50 312.00,285.43 312.50,281.53 313.00,277.82 313.50,274.32 314.00,271.05 314.50,268.02 315.00,265.25 315.50,262.75 316.00,260.54 316.50,258.62 317.00,257.01 317.50,255.71 318.00,254.73 318.50,254.07 319.00,253.74 319.50,253.74 320.00,254.07 320.50,254.73 321.00,255.71 321.50,257.01 322.00,258.62 322.50,260.54 323.00,262.75 323.50,265.25 324.00,268.02 324.50,271.05 325.00,274.32 325.50,277.82 326.00,281.53 326.50,285.43 327.00,289.50 327.50,293.72 328.00,298.07 328.50,302.54 329.00,307.09 329.50,311.70 330.00,316.36 330.50,321.04 331.00,325.71 331.50,330.35 332.00,334.94 332.50,339.46 333.00,343.88 333.50,348.19 334.00,352.35 334.50,356.36 335.00,360.18 335.50,363.81 336.00,367.22 336.50,370.39 337.00,373.32 337.50,375.98 338.00,378.37 338.50,380.46 339.00,382.26 339.50,383.75 340.00,384.92 340.50,385.77 341.00,386.30 341.50,386.50 342.00,386.37 342.50,385.91 343.00,385.12 343.50,384.01 344.00,382.58 344.50,380.85 345.00,378.81 345.50,376.48 346.00,373.87 346.50,371.00 347.00,367.87 347.50,364.51 348.00,360.92 348.50,357.14 349.00,353.16 349.50,349.03 350.00,344.75 350.50,340.35 351.00,335.85 351.50,331.27 352.00,326.64 352.50,321.97 353.00,317.29 353.50,312.63 354.00,308.01 354.50,303.44 355.00,298.96 355.50,294.58 356.00,290.33 356.50,286.23 357.00,282.29 357.50,278.54 358.00,275.00 358.50,271.68 359.00,268.61 359.50,265.78 360.00,263.23 360.50,260.96 361.00,258.98 361.50,257.31 362.00,255.94 362.50,254.90 363.00,254.18 363.50,253.78 364.00,253.71 364.50,253.98 365.00,254.57 365.50,255.49 366.00,256.72 366.50,258.27 367.00,260.13 367.50,262.29 368.00,264.73 368.50,267.45 369.00,270.42 369.50,273.65 370.00,277.10 370.50,280.77 371.00,284.63 371.50,288.67 372.00,292.86 372.50,297.19 373.00,301.64 373.50,306.17 374.00,310.78 374.50,315.43 375.00,320.10 375.50,324.77 376.00,329.42 376.50,334.03 377.00,338.56 377.50,343.01 378.00,347.34 378.50,351.53 379.00,355.57 379.50,359.43 380.00,363.10 380.50,366.55 381.00,369.78 381.50,372.75 382.00,375.47 382.50,377.91 383.00,380.07 383.50,381.93 384.00,383.48 384.50,384.71 385.00,385.63 385.50,386.22 386.00,386.49 386.50,386.42 387.00,386.02 387.50,385.30 388.00,384.26 388.50,382.89 389.00,381.22 389.50,379.24 390.00,376.97 390.50,374.42 391.00,371.59 391.50,368.52 392.00,365.20 392.50,361.66 393.00,357.91 393.50,353.97 394.00,349.87 394.50,345.62 395.00,341.24 395.50,336.76 396.00,332.19 396.50,327.57 397.00,322.91 397.50,318.23 398.00,313.56 398.50,308.93 399.00,304.35 399.50,299.85 400.00,295.45 400.50,291.17 401.00,287.04 401.50,283.06 402.00,279.28 402.50,275.69 403.00,272.33 403.50,269.20 404.00,266.33 404.50,263.72 405.00,261.39 405.50,259.35 406.00,257.62 406.50,256.19 407.00,255.08 407.50,254.29 408.00,253.83 408.50,253.70 409.00,253.90 409.50,254.43 410.00,255.28 410.50,256.45 411.00,257.94 411.50,259.74 412.00,261.83 412.50,264.22 413.00,266.88 413.50,269.81 414.00,272.98 414.50,276.39 415.00,280.02 415.50,283.84 416.00,287.85 416.50,292.01 417.00,296.32 417.50,300.74 418.00,305.26 418.50,309.85 419.00,314.49 419.50,319.16 420.00,323.84 420.50,328.50 421.00,333.11 421.50,337.66 422.00,342.13 422.50,346.48 423.00,350.70 423.50,354.77 424.00,358.67 424.50,362.38 425.00,365.88 425.50,369.15 426.00,372.18 426.50,374.95 427.00,377.45 427.50,379.66 428.00,381.58 428.50,383.19 429.00,384.49 429.50,385.47 430.00,386.13 430.50,386.46 431.00,386.46 431.50,386.13 432.00,385.47 432.50,384.49 433.00,383.19 433.50,381.58 434.00,379.66 434.50,377.45 435.00,374.95 435.50,372.18 436.00,369.15 436.50,365.88 437.00,362.38 437.50,358.67 438.00,354.77 438.50,350.70 439.00,346.48 439.50,342.13 440.00,337.66 440.50,333.11 441.00,328.50 441.50,323.84 442.00,319.16 442.50,314.49 443.00,309.85 443.50,305.26 444.00,300.74 444.50,296.32 445.00,292.01 445.50,287.85 446.00,283.84 446.50,280.02 447.00,276.39 447.50,272.98 448.00,269.81 448.50,266.88 449.00,264.22 449.50,261.83 450.00,259.74 450.50,257.94 451.00,256.45 451.50,255.28 452.00,254.43 452.50,253.90 453.00,253.70 453.50,253.83 454.00,254.29 454.50,255.08 455.00,256.19 455.50,257.62 456.00,259.35 456.50,261.39 457.00,263.72 457.50,266.33 458.00,269.20 458.50,272.33 459.00,275.69 459.50,279.28 460.00,283.06 460.50,287.04 461.00,291.17 461.50,295.45 462.00,299.85 462.50,304.35 463.00,308.93 463.50,313.56 464.00,318.23 464.50,322.91 465.00,327.57 465.50,332.19 466.00,336.76 466.50,341.24 467.00,345.62 467.50,349.87 468.00,353.97 468.50,357.91 469.00,361.66 469.50,365.20 470.00,368.52 470.50,371.59 471.00,374.42 471.50,376.97 472.00,379.24 472.50,381.22 473.00,382.89 473.50,384.26 474.00,385.30 474.50,386.02 475.00,386.42 475.50,386.49 476.00,386.22 476.50,385.63 477.00,384.71 477.50,383.48 478.00,381.93 478.50,380.07 479.00,377.91 479.50,375.47 480.00,372.75 480.50,369.78 481.00,366.55 481.50,363.10 482.00,359.43 482.50,355.57 483.00,351.53 483.50,347.34 484.00,343.01 484.50,338.56 485.00,334.03 485.50,329.42 486.00,324.77 486.50,320.10" stroke="#24A0B4" stroke-width="0.95" fill="none" stroke-linejoin="round"/>
<polyline points="40.50,425.76 41.00,429.44 41.50,433.34 42.00,437.46 42.50,441.77 43.00,446.26 43.50,450.89 44.00,455.65 44.50,460.52 45.00,465.46 45.50,470.46 46.00,475.49 46.50,480.53 47.00,485.54 47.50,490.51 48.00,495.41 48.50,500.22 49.00,504.91 49.50,509.45 50.00,513.84 50.50,518.04 51.00,522.03 51.50,525.80 52.00,529.32 52.50,532.58 53.00,535.56 53.50,538.25 54.00,540.64 54.50,542.70 55.00,544.44 55.50,545.84 56.00,546.89 56.50,547.60 57.00,547.96 57.50,547.96 58.00,547.60 58.50,546.89 59.00,545.84 59.50,544.44 60.00,542.70 60.50,540.64 61.00,538.25 61.50,535.56 62.00,532.58 62.50,529.32 63.00,525.80 63.50,522.03 64.00,518.04 64.50,513.84 65.00,509.45 65.50,504.91 66.00,500.22 66.50,495.41 67.00,490.51 67.50,485.54 68.00,480.53 68.50,475.49 69.00,470.46 69.50,465.46 70.00,460.52 70.50,455.65 71.00,450.89 71.50,446.26 72.00,441.77 72.50,437.46 73.00,433.34 73.50,429.44 74.00,425.76 74.50,422.34 75.00,419.19 75.50,416.33 76.00,413.76 76.50,411.50 77.00,409.56 77.50,407.96 78.00,406.70 78.50,405.78 79.00,405.21 79.50,405.00 80.00,405.14 80.50,405.64 81.00,406.49 81.50,407.68 82.00,409.22 82.50,411.09 83.00,413.28 83.50,415.79 84.00,418.60 84.50,421.69 85.00,425.06 85.50,428.68 86.00,432.54 86.50,436.62 87.00,440.90 87.50,445.35 88.00,449.95 88.50,454.69 89.00,459.54 89.50,464.47 90.00,469.46 90.50,474.49 91.00,479.52 91.50,484.54 92.00,489.52 92.50,494.44 93.00,499.26 93.50,503.98 94.00,508.56 94.50,512.97 95.00,517.21 95.50,521.25 96.00,525.06 96.50,528.64 97.00,531.95 97.50,534.99 98.00,537.74 98.50,540.18 99.00,542.31 99.50,544.12 100.00,545.59 100.50,546.71 101.00,547.49 101.50,547.91 102.00,547.98 102.50,547.70 103.00,547.06 103.50,546.08 104.00,544.75 104.50,543.07 105.00,541.07 105.50,538.75 106.00,536.12 106.50,533.20 107.00,529.99 107.50,526.52 108.00,522.80 108.50,518.85 109.00,514.69 109.50,510.34 110.00,505.83 110.50,501.16 111.00,496.38 111.50,491.50 112.00,486.54 112.50,481.53 113.00,476.50 113.50,471.47 114.00,466.46 114.50,461.50 115.00,456.62 115.50,451.84 116.00,447.17 116.50,442.66 117.00,438.31 117.50,434.15 118.00,430.20 118.50,426.48 119.00,423.01 119.50,419.80 120.00,416.88 120.50,414.25 121.00,411.93 121.50,409.93 122.00,408.25 122.50,406.92 123.00,405.94 123.50,405.30 124.00,405.02 124.50,405.09 125.00,405.51 125.50,406.29 126.00,407.41 126.50,408.88 127.00,410.69 127.50,412.82 128.00,415.26 128.50,418.01 129.00,421.05 129.50,424.36 130.00,427.94 130.50,431.75 131.00,435.79 131.50,440.03 132.00,444.44 132.50,449.02 133.00,453.74 133.50,458.56 134.00,463.48 134.50,468.46 135.00,473.48 135.50,478.51 136.00,483.54 136.50,488.53 137.00,493.46 137.50,498.31 138.00,503.05 138.50,507.65 139.00,512.10 139.50,516.38 140.00,520.46 140.50,524.32 141.00,527.94 141.50,531.31 142.00,534.40 142.50,537.21 143.00,539.72 143.50,541.91 144.00,543.78 144.50,545.32 145.00,546.51 145.50,547.36 146.00,547.86 146.50,548.00 147.00,547.79 147.50,547.22 148.00,546.30 148.50,545.04 149.00,543.44 149.50,541.50 150.00,539.24 150.50,536.67 151.00,533.81 151.50,530.66 152.00,527.24 152.50,523.56 153.00,519.66 153.50,515.54 154.00,511.23 154.50,506.74 155.00,502.11 155.50,497.35 156.00,492.48 156.50,487.54 157.00,482.54 157.50,477.51 158.00,472.47 158.50,467.46 159.00,462.49 159.50,457.59 160.00,452.78 160.50,448.09 161.00,443.55 161.50,439.16 162.00,434.96 162.50,430.97 163.00,427.20 163.50,423.68 164.00,420.42 164.50,417.44 165.00,414.75 165.50,412.36 166.00,410.30 166.50,408.56 167.00,407.16 167.50,406.11 168.00,405.40 168.50,405.04 169.00,405.04 169.50,405.40 170.00,406.11 170.50,407.16 171.00,408.56 171.50,410.30 172.00,412.36 172.50,414.75 173.00,417.44 173.50,420.42 174.00,423.68 174.50,427.20 175.00,430.97 175.50,434.96 176.00,439.16 176.50,443.55 177.00,448.09 177.50,452.78 178.00,457.59 178.50,462.49 179.00,467.46 179.50,472.47 180.00,477.51 180.50,482.54 181.00,487.54 181.50,492.48 182.00,497.35 182.50,502.11 183.00,506.74 183.50,511.23 184.00,515.54 184.50,519.66 185.00,523.56 185.50,527.24 186.00,530.66 186.50,533.81 187.00,536.67 187.50,539.24 188.00,541.50 188.50,543.44 189.00,545.04 189.50,546.30 190.00,547.22 190.50,547.79 191.00,548.00 191.50,547.86 192.00,547.36 192.50,546.51 193.00,545.32 193.50,543.78 194.00,541.91 194.50,539.72 195.00,537.21 195.50,534.40 196.00,531.31 196.50,527.94 197.00,524.32 197.50,520.46 198.00,516.38 198.50,512.10 199.00,507.65 199.50,503.05 200.00,498.31 200.50,493.46 201.00,488.53 201.50,483.54 202.00,478.51 202.50,473.48 203.00,468.46 203.50,463.48 204.00,458.56 204.50,453.74 205.00,449.02 205.50,444.44 206.00,440.03 206.50,435.79 207.00,431.75 207.50,427.94 208.00,424.36 208.50,421.05 209.00,418.01 209.50,415.26 210.00,412.82 210.50,410.69 211.00,408.88 211.50,407.41 212.00,406.29 212.50,405.51 213.00,405.09 213.50,405.02 214.00,405.30 214.50,405.94 215.00,406.92 215.50,408.25 216.00,409.93 216.50,411.93 217.00,414.25 217.50,416.88 218.00,419.80 218.50,423.01 219.00,426.48 219.50,430.20 220.00,434.15 220.50,438.31 221.00,442.66 221.50,447.17 222.00,451.84 222.50,456.62 223.00,461.50 223.50,466.46 224.00,471.47 224.50,476.50 225.00,481.53 225.50,486.54 226.00,491.50 226.50,496.38 227.00,501.16 227.50,505.83 228.00,510.34 228.50,514.69 229.00,518.85 229.50,522.80 230.00,526.52 230.50,529.99 231.00,533.20 231.50,536.12 232.00,538.75 232.50,541.07 233.00,543.07 233.50,544.75 234.00,546.08 234.50,547.06 235.00,547.70 235.50,547.98 236.00,547.91 236.50,547.49 237.00,546.71 237.50,545.59 238.00,544.12 238.50,542.31 239.00,540.18 239.50,537.74 240.00,534.99 240.50,531.95 241.00,528.64 241.50,525.06 242.00,521.25 242.50,517.21 243.00,512.97 243.50,508.56 244.00,503.98 244.50,499.26 245.00,494.44 245.50,489.52 246.00,484.54 246.50,479.52 247.00,474.49 247.50,469.46 248.00,464.47 248.50,459.54 249.00,454.69 249.50,449.95 250.00,445.35 250.50,440.90 251.00,436.62 251.50,432.54 252.00,428.68 252.50,425.06 253.00,421.69 253.50,418.60 254.00,415.79 254.50,413.28 255.00,411.09 255.50,409.22 256.00,407.68 256.50,406.49 257.00,405.64 257.50,405.14 258.00,405.00 258.50,405.21 259.00,405.78 259.50,406.70 260.00,407.96 260.50,409.56 261.00,411.50 261.50,413.76 262.00,416.33 262.50,419.19 263.00,422.34 263.50,425.76 264.00,429.44 264.50,433.34 265.00,437.46 265.50,441.77 266.00,446.26 266.50,450.89 267.00,455.65 267.50,460.52 268.00,465.46 268.50,470.46 269.00,475.49 269.50,480.53 270.00,485.54 270.50,490.51 271.00,495.41 271.50,500.22 272.00,504.91 272.50,509.45 273.00,513.84 273.50,518.04 274.00,522.03 274.50,525.80 275.00,529.32 275.50,532.58 276.00,535.56 276.50,538.25 277.00,540.64 277.50,542.70 278.00,544.44 278.50,545.84 279.00,546.89 279.50,547.60 280.00,547.96 280.50,547.96 281.00,547.60 281.50,546.89 282.00,545.84 282.50,544.44 283.00,542.70 283.50,540.64 284.00,538.25 284.50,535.56 285.00,532.58 285.50,529.32 286.00,525.80 286.50,522.03 287.00,518.04 287.50,513.84 288.00,509.45 288.50,504.91 289.00,500.22 289.50,495.41 290.00,490.51 290.50,485.54 291.00,480.53 291.50,475.49 292.00,470.46 292.50,465.46 293.00,460.52 293.50,455.65 294.00,450.89 294.50,446.26 295.00,441.77 295.50,437.46 296.00,433.34 296.50,429.44 297.00,425.76 297.50,422.34 298.00,419.19 298.50,416.33 299.00,413.76 299.50,411.50 300.00,409.56 300.50,407.96 301.00,406.70 301.50,405.78 302.00,405.21 302.50,405.00 303.00,405.14 303.50,405.64 304.00,406.49 304.50,407.68 305.00,409.22 305.50,411.09 306.00,413.28 306.50,415.79 307.00,418.60 307.50,421.69 308.00,425.06 308.50,428.68 309.00,432.54 309.50,436.62 310.00,440.90 310.50,445.35 311.00,449.95 311.50,454.69 312.00,459.54 312.50,464.47 313.00,469.46 313.50,474.49 314.00,479.52 314.50,484.54 315.00,489.52 315.50,494.44 316.00,499.26 316.50,503.98 317.00,508.56 317.50,512.97 318.00,517.21 318.50,521.25 319.00,525.06 319.50,528.64 320.00,531.95 320.50,534.99 321.00,537.74 321.50,540.18 322.00,542.31 322.50,544.12 323.00,545.59 323.50,546.71 324.00,547.49 324.50,547.91 325.00,547.98 325.50,547.70 326.00,547.06 326.50,546.08 327.00,544.75 327.50,543.07 328.00,541.07 328.50,538.75 329.00,536.12 329.50,533.20 330.00,529.99 330.50,526.52 331.00,522.80 331.50,518.85 332.00,514.69 332.50,510.34 333.00,505.83 333.50,501.16 334.00,496.38 334.50,491.50 335.00,486.54 335.50,481.53 336.00,476.50 336.50,471.47 337.00,466.46 337.50,461.50 338.00,456.62 338.50,451.84 339.00,447.17 339.50,442.66 340.00,438.31 340.50,434.15 341.00,430.20 341.50,426.48 342.00,423.01 342.50,419.80 343.00,416.88 343.50,414.25 344.00,411.93 344.50,409.93 345.00,408.25 345.50,406.92 346.00,405.94 346.50,405.30 347.00,405.02 347.50,405.09 348.00,405.51 348.50,406.29 349.00,407.41 349.50,408.88 350.00,410.69 350.50,412.82 351.00,415.26 351.50,418.01 352.00,421.05 352.50,424.36 353.00,427.94 353.50,431.75 354.00,435.79 354.50,440.03 355.00,444.44 355.50,449.02 356.00,453.74 356.50,458.56 357.00,463.48 357.50,468.46 358.00,473.48 358.50,478.51 359.00,483.54 359.50,488.53 360.00,493.46 360.50,498.31 361.00,503.05 361.50,507.65 362.00,512.10 362.50,516.38 363.00,520.46 363.50,524.32 364.00,527.94 364.50,531.31 365.00,534.40 365.50,537.21 366.00,539.72 366.50,541.91 367.00,543.78 367.50,545.32 368.00,546.51 368.50,547.36 369.00,547.86 369.50,548.00 370.00,547.79 370.50,547.22 371.00,546.30 371.50,545.04 372.00,543.44 372.50,541.50 373.00,539.24 373.50,536.67 374.00,533.81 374.50,530.66 375.00,527.24 375.50,523.56 376.00,519.66 376.50,515.54 377.00,511.23 377.50,506.74 378.00,502.11 378.50,497.35 379.00,492.48 379.50,487.54 380.00,482.54 380.50,477.51 381.00,472.47 381.50,467.46 382.00,462.49 382.50,457.59 383.00,452.78 383.50,448.09 384.00,443.55 384.50,439.16 385.00,434.96 385.50,430.97 386.00,427.20 386.50,423.68 387.00,420.42 387.50,417.44 388.00,414.75 388.50,412.36 389.00,410.30 389.50,408.56 390.00,407.16 390.50,406.11 391.00,405.40 391.50,405.04 392.00,405.04 392.50,405.40 393.00,406.11 393.50,407.16 394.00,408.56 394.50,410.30 395.00,412.36 395.50,414.75 396.00,417.44 396.50,420.42 397.00,423.68 397.50,427.20 398.00,430.97 398.50,434.96 399.00,439.16 399.50,443.55 400.00,448.09 400.50,452.78 401.00,457.59 401.50,462.49 402.00,467.46 402.50,472.47 403.00,477.51 403.50,482.54 404.00,487.54 404.50,492.48 405.00,497.35 405.50,502.11 406.00,506.74 406.50,511.23 407.00,515.54 407.50,519.66 408.00,523.56 408.50,527.24 409.00,530.66 409.50,533.81 410.00,536.67 410.50,539.24 411.00,541.50 411.50,543.44 412.00,545.04 412.50,546.30 413.00,547.22 413.50,547.79 414.00,548.00 414.50,547.86 415.00,547.36 415.50,546.51 416.00,545.32 416.50,543.78 417.00,541.91 417.50,539.72 418.00,537.21 418.50,534.40 419.00,531.31 419.50,527.94 420.00,524.32 420.50,520.46 421.00,516.38 421.50,512.10 422.00,507.65 422.50,503.05 423.00,498.31 423.50,493.46 424.00,488.53 424.50,483.54 425.00,478.51 425.50,473.48 426.00,468.46 426.50,463.48 427.00,458.56 427.50,453.74 428.00,449.02 428.50,444.44 429.00,440.03 429.50,435.79 430.00,431.75 430.50,427.94 431.00,424.36 431.50,421.05 432.00,418.01 432.50,415.26 433.00,412.82 433.50,410.69 434.00,408.88 434.50,407.41 435.00,406.29 435.50,405.51 436.00,405.09 436.50,405.02 437.00,405.30 437.50,405.94 438.00,406.92 438.50,408.25 439.00,409.93 439.50,411.93 440.00,414.25 440.50,416.88 441.00,419.80 441.50,423.01 442.00,426.48 442.50,430.20 443.00,434.15 443.50,438.31 444.00,442.66 444.50,447.17 445.00,451.84 445.50,456.62 446.00,461.50 446.50,466.46 447.00,471.47 447.50,476.50 448.00,481.53 448.50,486.54 449.00,491.50 449.50,496.38 450.00,501.16 450.50,505.83 451.00,510.34 451.50,514.69 452.00,518.85 452.50,522.80 453.00,526.52 453.50,529.99 454.00,533.20 454.50,536.12 455.00,538.75 455.50,541.07 456.00,543.07 456.50,544.75 457.00,546.08 457.50,547.06 458.00,547.70 458.50,547.98 459.00,547.91 459.50,547.49 460.00,546.71 460.50,545.59 461.00,544.12 461.50,542.31 462.00,540.18 462.50,537.74 463.00,534.99 463.50,531.95 464.00,528.64 464.50,525.06 465.00,521.25 465.50,517.21 466.00,512.97 466.50,508.56 467.00,503.98 467.50,499.26 468.00,494.44 468.50,489.52 469.00,484.54 469.50,479.52 470.00,474.49 470.50,469.46 471.00,464.47 471.50,459.54 472.00,454.69 472.50,449.95 473.00,445.35 473.50,440.90 474.00,436.62 474.50,432.54 475.00,428.68 475.50,425.06 476.00,421.69 476.50,418.60 477.00,415.79 477.50,413.28 478.00,411.09 478.50,409.22 479.00,407.68 479.50,406.49 480.00,405.64 480.50,405.14 481.00,405.00 481.50,405.21 482.00,405.78 482.50,406.70 483.00,407.96 483.50,409.56 484.00,411.50 484.50,413.76 485.00,416.33 485.50,419.19 486.00,422.34 486.50,425.76" stroke="#D80000" stroke-width="1.1" fill="none" stroke-linejoin="round"/>
<polyline points="40.50,428.25 41.00,431.74 41.50,435.45 42.00,439.37 42.50,443.47 43.00,447.74 43.50,452.15 44.00,456.67 44.50,461.30 45.00,466.00 45.50,470.76 46.00,475.54 46.50,480.33 47.00,485.10 47.50,489.82 48.00,494.48 48.50,499.06 49.00,503.51 49.50,507.84 50.00,512.01 50.50,516.00 51.00,519.80 51.50,523.38 52.00,526.73 52.50,529.83 53.00,532.67 53.50,535.23 54.00,537.50 54.50,539.46 55.00,541.11 55.50,542.44 56.00,543.45 56.50,544.12 57.00,544.46 57.50,544.46 58.00,544.12 58.50,543.45 59.00,542.44 59.50,541.11 60.00,539.46 60.50,537.50 61.00,535.23 61.50,532.67 62.00,529.83 62.50,526.73 63.00,523.38 63.50,519.80 64.00,516.00 64.50,512.01 65.00,507.84 65.50,503.51 66.00,499.06 66.50,494.48 67.00,489.82 67.50,485.10 68.00,480.33 68.50,475.54 69.00,470.76 69.50,466.00 70.00,461.30 70.50,456.67 71.00,452.15 71.50,447.74 72.00,443.47 72.50,439.37 73.00,435.45 73.50,431.74 74.00,428.25 74.50,425.00 75.00,422.00 75.50,419.27 76.00,416.83 76.50,414.68 77.00,412.84 77.50,411.32 78.00,410.11 78.50,409.24 79.00,408.70 79.50,408.50 80.00,408.64 80.50,409.11 81.00,409.91 81.50,411.05 82.00,412.51 82.50,414.29 83.00,416.37 83.50,418.76 84.00,421.43 84.50,424.37 85.00,427.58 85.50,431.02 86.00,434.69 86.50,438.57 87.00,442.64 87.50,446.87 88.00,451.25 88.50,455.76 89.00,460.37 89.50,465.06 90.00,469.81 90.50,474.58 91.00,479.37 91.50,484.15 92.00,488.88 92.50,493.56 93.00,498.15 93.50,502.63 94.00,506.99 94.50,511.19 95.00,515.22 95.50,519.06 96.00,522.68 96.50,526.08 97.00,529.24 97.50,532.13 98.00,534.74 98.50,537.07 99.00,539.09 99.50,540.81 100.00,542.20 100.50,543.27 101.00,544.01 101.50,544.42 102.00,544.48 102.50,544.22 103.00,543.61 103.50,542.67 104.00,541.40 104.50,539.82 105.00,537.91 105.50,535.71 106.00,533.21 106.50,530.42 107.00,527.37 107.50,524.07 108.00,520.53 108.50,516.78 109.00,512.82 109.50,508.69 110.00,504.39 110.50,499.96 111.00,495.41 111.50,490.76 112.00,486.05 112.50,481.29 113.00,476.50 113.50,471.71 114.00,466.95 114.50,462.24 115.00,457.59 115.50,453.04 116.00,448.61 116.50,444.31 117.00,440.18 117.50,436.22 118.00,432.47 118.50,428.93 119.00,425.63 119.50,422.58 120.00,419.79 120.50,417.29 121.00,415.09 121.50,413.18 122.00,411.60 122.50,410.33 123.00,409.39 123.50,408.78 124.00,408.52 124.50,408.58 125.00,408.99 125.50,409.73 126.00,410.80 126.50,412.19 127.00,413.91 127.50,415.93 128.00,418.26 128.50,420.87 129.00,423.76 129.50,426.92 130.00,430.32 130.50,433.94 131.00,437.78 131.50,441.81 132.00,446.01 132.50,450.37 133.00,454.85 133.50,459.44 134.00,464.12 134.50,468.85 135.00,473.63 135.50,478.42 136.00,483.19 136.50,487.94 137.00,492.63 137.50,497.24 138.00,501.75 138.50,506.13 139.00,510.36 139.50,514.43 140.00,518.31 140.50,521.98 141.00,525.42 141.50,528.63 142.00,531.57 142.50,534.24 143.00,536.63 143.50,538.71 144.00,540.49 144.50,541.95 145.00,543.09 145.50,543.89 146.00,544.36 146.50,544.50 147.00,544.30 147.50,543.76 148.00,542.89 148.50,541.68 149.00,540.16 149.50,538.32 150.00,536.17 150.50,533.73 151.00,531.00 151.50,528.00 152.00,524.75 152.50,521.26 153.00,517.55 153.50,513.63 154.00,509.53 154.50,505.26 155.00,500.85 155.50,496.33 156.00,491.70 156.50,487.00 157.00,482.24 157.50,477.46 158.00,472.67 158.50,467.90 159.00,463.18 159.50,458.52 160.00,453.94 160.50,449.49 161.00,445.16 161.50,440.99 162.00,437.00 162.50,433.20 163.00,429.62 163.50,426.27 164.00,423.17 164.50,420.33 165.00,417.77 165.50,415.50 166.00,413.54 166.50,411.89 167.00,410.56 167.50,409.55 168.00,408.88 168.50,408.54 169.00,408.54 169.50,408.88 170.00,409.55 170.50,410.56 171.00,411.89 171.50,413.54 172.00,415.50 172.50,417.77 173.00,420.33 173.50,423.17 174.00,426.27 174.50,429.62 175.00,433.20 175.50,437.00 176.00,440.99 176.50,445.16 177.00,449.49 177.50,453.94 178.00,458.52 178.50,463.18 179.00,467.90 179.50,472.67 180.00,477.46 180.50,482.24 181.00,487.00 181.50,491.70 182.00,496.33 182.50,500.85 183.00,505.26 183.50,509.53 184.00,513.63 184.50,517.55 185.00,521.26 185.50,524.75 186.00,528.00 186.50,531.00 187.00,533.73 187.50,536.17 188.00,538.32 188.50,540.16 189.00,541.68 189.50,542.89 190.00,543.76 190.50,544.30 191.00,544.50 191.50,544.36 192.00,543.89 192.50,543.09 193.00,541.95 193.50,540.49 194.00,538.71 194.50,536.63 195.00,534.24 195.50,531.57 196.00,528.63 196.50,525.42 197.00,521.98 197.50,518.31 198.00,514.43 198.50,510.36 199.00,506.13 199.50,501.75 200.00,497.24 200.50,492.63 201.00,487.94 201.50,483.19 202.00,478.42 202.50,473.63 203.00,468.85 203.50,464.12 204.00,459.44 204.50,454.85 205.00,450.37 205.50,446.01 206.00,441.81 206.50,437.78 207.00,433.94 207.50,430.32 208.00,426.92 208.50,423.76 209.00,420.87 209.50,418.26 210.00,415.93 210.50,413.91 211.00,412.19 211.50,410.80 212.00,409.73 212.50,408.99 213.00,408.58 213.50,408.52 214.00,408.78 214.50,409.39 215.00,410.33 215.50,411.60 216.00,413.18 216.50,415.09 217.00,417.29 217.50,419.79 218.00,422.58 218.50,425.63 219.00,428.93 219.50,432.47 220.00,436.22 220.50,440.18 221.00,444.31 221.50,448.61 222.00,453.04 222.50,457.59 223.00,462.24 223.50,466.95 224.00,471.71 224.50,476.50 225.00,481.29 225.50,486.05 226.00,490.76 226.50,495.41 227.00,499.96 227.50,504.39 228.00,508.69 228.50,512.82 229.00,516.78 229.50,520.53 230.00,524.07 230.50,527.37 231.00,530.42 231.50,533.21 232.00,535.71 232.50,537.91 233.00,539.82 233.50,541.40 234.00,542.67 234.50,543.61 235.00,544.22 235.50,544.48 236.00,544.42 236.50,544.01 237.00,543.27 237.50,542.20 238.00,540.81 238.50,539.09 239.00,537.07 239.50,534.74 240.00,532.13 240.50,529.24 241.00,526.08 241.50,522.68 242.00,519.06 242.50,515.22 243.00,511.19 243.50,506.99 244.00,502.63 244.50,498.15 245.00,493.56 245.50,488.88 246.00,484.15 246.50,479.37 247.00,474.58 247.50,469.81 248.00,465.06 248.50,460.37 249.00,455.76 249.50,451.25 250.00,446.87 250.50,442.64 251.00,438.57 251.50,434.69 252.00,431.02 252.50,427.58 253.00,424.37 253.50,421.43 254.00,418.76 254.50,416.37 255.00,414.29 255.50,412.51 256.00,411.05 256.50,409.91 257.00,409.11 257.50,408.64 258.00,408.50 258.50,408.70 259.00,409.24 259.50,410.11 260.00,411.32 260.50,412.84 261.00,414.68 261.50,416.83 262.00,419.27 262.50,422.00 263.00,425.00 263.50,428.25 264.00,431.74 264.50,435.45 265.00,439.37 265.50,443.47 266.00,447.74 266.50,452.15 267.00,456.67 267.50,461.30 268.00,466.00 268.50,470.76 269.00,475.54 269.50,480.33 270.00,485.10 270.50,489.82 271.00,494.48 271.50,499.06 272.00,503.51 272.50,507.84 273.00,512.01 273.50,516.00 274.00,519.80 274.50,523.38 275.00,526.73 275.50,529.83 276.00,532.67 276.50,535.23 277.00,537.50 277.50,539.46 278.00,541.11 278.50,542.44 279.00,543.45 279.50,544.12 280.00,544.46 280.50,544.46 281.00,544.12 281.50,543.45 282.00,542.44 282.50,541.11 283.00,539.46 283.50,537.50 284.00,535.23 284.50,532.67 285.00,529.83 285.50,526.73 286.00,523.38 286.50,519.80 287.00,516.00 287.50,512.01 288.00,507.84 288.50,503.51 289.00,499.06 289.50,494.48 290.00,489.82 290.50,485.10 291.00,480.33 291.50,475.54 292.00,470.76 292.50,466.00 293.00,461.30 293.50,456.67 294.00,452.15 294.50,447.74 295.00,443.47 295.50,439.37 296.00,435.45 296.50,431.74 297.00,428.25 297.50,425.00 298.00,422.00 298.50,419.27 299.00,416.83 299.50,414.68 300.00,412.84 300.50,411.32 301.00,410.11 301.50,409.24 302.00,408.70 302.50,408.50 303.00,408.64 303.50,409.11 304.00,409.91 304.50,411.05 305.00,412.51 305.50,414.29 306.00,416.37 306.50,418.76 307.00,421.43 307.50,424.37 308.00,427.58 308.50,431.02 309.00,434.69 309.50,438.57 310.00,442.64 310.50,446.87 311.00,451.25 311.50,455.76 312.00,460.37 312.50,465.06 313.00,469.81 313.50,474.58 314.00,479.37 314.50,484.15 315.00,488.88 315.50,493.56 316.00,498.15 316.50,502.63 317.00,506.99 317.50,511.19 318.00,515.22 318.50,519.06 319.00,522.68 319.50,526.08 320.00,529.24 320.50,532.13 321.00,534.74 321.50,537.07 322.00,539.09 322.50,540.81 323.00,542.20 323.50,543.27 324.00,544.01 324.50,544.42 325.00,544.48 325.50,544.22 326.00,543.61 326.50,542.67 327.00,541.40 327.50,539.82 328.00,537.91 328.50,535.71 329.00,533.21 329.50,530.42 330.00,527.37 330.50,524.07 331.00,520.53 331.50,516.78 332.00,512.82 332.50,508.69 333.00,504.39 333.50,499.96 334.00,495.41 334.50,490.76 335.00,486.05 335.50,481.29 336.00,476.50 336.50,471.71 337.00,466.95 337.50,462.24 338.00,457.59 338.50,453.04 339.00,448.61 339.50,444.31 340.00,440.18 340.50,436.22 341.00,432.47 341.50,428.93 342.00,425.63 342.50,422.58 343.00,419.79 343.50,417.29 344.00,415.09 344.50,413.18 345.00,411.60 345.50,410.33 346.00,409.39 346.50,408.78 347.00,408.52 347.50,408.58 348.00,408.99 348.50,409.73 349.00,410.80 349.50,412.19 350.00,413.91 350.50,415.93 351.00,418.26 351.50,420.87 352.00,423.76 352.50,426.92 353.00,430.32 353.50,433.94 354.00,437.78 354.50,441.81 355.00,446.01 355.50,450.37 356.00,454.85 356.50,459.44 357.00,464.12 357.50,468.85 358.00,473.63 358.50,478.42 359.00,483.19 359.50,487.94 360.00,492.63 360.50,497.24 361.00,501.75 361.50,506.13 362.00,510.36 362.50,514.43 363.00,518.31 363.50,521.98 364.00,525.42 364.50,528.63 365.00,531.57 365.50,534.24 366.00,536.63 366.50,538.71 367.00,540.49 367.50,541.95 368.00,543.09 368.50,543.89 369.00,544.36 369.50,544.50 370.00,544.30 370.50,543.76 371.00,542.89 371.50,541.68 372.00,540.16 372.50,538.32 373.00,536.17 373.50,533.73 374.00,531.00 374.50,528.00 375.00,524.75 375.50,521.26 376.00,517.55 376.50,513.63 377.00,509.53 377.50,505.26 378.00,500.85 378.50,496.33 379.00,491.70 379.50,487.00 380.00,482.24 380.50,477.46 381.00,472.67 381.50,467.90 382.00,463.18 382.50,458.52 383.00,453.94 383.50,449.49 384.00,445.16 384.50,440.99 385.00,437.00 385.50,433.20 386.00,429.62 386.50,426.27 387.00,423.17 387.50,420.33 388.00,417.77 388.50,415.50 389.00,413.54 389.50,411.89 390.00,410.56 390.50,409.55 391.00,408.88 391.50,408.54 392.00,408.54 392.50,408.88 393.00,409.55 393.50,410.56 394.00,411.89 394.50,413.54 395.00,415.50 395.50,417.77 396.00,420.33 396.50,423.17 397.00,426.27 397.50,429.62 398.00,433.20 398.50,437.00 399.00,440.99 399.50,445.16 400.00,449.49 400.50,453.94 401.00,458.52 401.50,463.18 402.00,467.90 402.50,472.67 403.00,477.46 403.50,482.24 404.00,487.00 404.50,491.70 405.00,496.33 405.50,500.85 406.00,505.26 406.50,509.53 407.00,513.63 407.50,517.55 408.00,521.26 408.50,524.75 409.00,528.00 409.50,531.00 410.00,533.73 410.50,536.17 411.00,538.32 411.50,540.16 412.00,541.68 412.50,542.89 413.00,543.76 413.50,544.30 414.00,544.50 414.50,544.36 415.00,543.89 415.50,543.09 416.00,541.95 416.50,540.49 417.00,538.71 417.50,536.63 418.00,534.24 418.50,531.57 419.00,528.63 419.50,525.42 420.00,521.98 420.50,518.31 421.00,514.43 421.50,510.36 422.00,506.13 422.50,501.75 423.00,497.24 423.50,492.63 424.00,487.94 424.50,483.19 425.00,478.42 425.50,473.63 426.00,468.85 426.50,464.12 427.00,459.44 427.50,454.85 428.00,450.37 428.50,446.01 429.00,441.81 429.50,437.78 430.00,433.94 430.50,430.32 431.00,426.92 431.50,423.76 432.00,420.87 432.50,418.26 433.00,415.93 433.50,413.91 434.00,412.19 434.50,410.80 435.00,409.73 435.50,408.99 436.00,408.58 436.50,408.52 437.00,408.78 437.50,409.39 438.00,410.33 438.50,411.60 439.00,413.18 439.50,415.09 440.00,417.29 440.50,419.79 441.00,422.58 441.50,425.63 442.00,428.93 442.50,432.47 443.00,436.22 443.50,440.18 444.00,444.31 444.50,448.61 445.00,453.04 445.50,457.59 446.00,462.24 446.50,466.95 447.00,471.71 447.50,476.50 448.00,481.29 448.50,486.05 449.00,490.76 449.50,495.41 450.00,499.96 450.50,504.39 451.00,508.69 451.50,512.82 452.00,516.78 452.50,520.53 453.00,524.07 453.50,527.37 454.00,530.42 454.50,533.21 455.00,535.71 455.50,537.91 456.00,539.82 456.50,541.40 457.00,542.67 457.50,543.61 458.00,544.22 458.50,544.48 459.00,544.42 459.50,544.01 460.00,543.27 460.50,542.20 461.00,540.81 461.50,539.09 462.00,537.07 462.50,534.74 463.00,532.13 463.50,529.24 464.00,526.08 464.50,522.68 465.00,519.06 465.50,515.22 466.00,511.19 466.50,506.99 467.00,502.63 467.50,498.15 468.00,493.56 468.50,488.88 469.00,484.15 469.50,479.37 470.00,474.58 470.50,469.81 471.00,465.06 471.50,460.37 472.00,455.76 472.50,451.25 473.00,446.87 473.50,442.64 474.00,438.57 474.50,434.69 475.00,431.02 475.50,427.58 476.00,424.37 476.50,421.43 477.00,418.76 477.50,416.37 478.00,414.29 478.50,412.51 479.00,411.05 479.50,409.91 480.00,409.11 480.50,408.64 481.00,408.50 481.50,408.70 482.00,409.24 482.50,410.11 483.00,411.32 483.50,412.84 484.00,414.68 484.50,416.83 485.00,419.27 485.50,422.00 486.00,425.00 486.50,428.25" stroke="#38C828" stroke-width="0.9" fill="none" stroke-linejoin="round"/>
<text x="142.5" y="81.6" font-size="7.6" fill="#008A00" font-weight="bold" textLength="17.5" lengthAdjust="spacingAndGlyphs" stroke="#008A00" stroke-width="0.2">V(a1)</text>
<text x="365.8" y="81.6" font-size="7.6" fill="#E000E0" font-weight="bold" textLength="17.4" lengthAdjust="spacingAndGlyphs" stroke="#E000E0" stroke-width="0.2">V(a2)</text>
<text x="131.2" y="241.2" font-size="7.6" fill="#0000E6" font-weight="bold" textLength="38.8" lengthAdjust="spacingAndGlyphs" stroke="#0000E6" stroke-width="0.2">Ix(U1:Plate)</text>
<text x="354.4" y="241.2" font-size="7.6" fill="#20A8B8" font-weight="bold" textLength="39.4" lengthAdjust="spacingAndGlyphs" stroke="#20A8B8" stroke-width="0.2">Ix(U3:Plate)</text>
<text x="144.5" y="398.8" font-size="7.6" fill="#00D000" font-weight="bold" textLength="13.2" lengthAdjust="spacingAndGlyphs" stroke="#00D000" stroke-width="0.2">V(1)</text>
<text x="367.7" y="398.8" font-size="7.6" fill="#E00000" font-weight="bold" textLength="12.9" lengthAdjust="spacingAndGlyphs" stroke="#E00000" stroke-width="0.2">V(2)</text>
<text x="634.5" y="140.2" font-size="9.6" fill="#1C4C1C" font-weight="bold" textLength="71.0" lengthAdjust="spacingAndGlyphs" stroke="#1C4C1C" stroke-width="0.28">.four 1000  V(in)</text>
<text x="700.3" y="166.6" font-size="9.6" fill="#1C4C1C" font-weight="bold" textLength="68.1" lengthAdjust="spacingAndGlyphs" stroke="#1C4C1C" stroke-width="0.28">.four 1000  V(1)</text>
<text x="765.9" y="185.0" font-size="9.6" fill="#1C4C1C" font-weight="bold" textLength="68.3" lengthAdjust="spacingAndGlyphs" stroke="#1C4C1C" stroke-width="0.28">.four 1000  V(2)</text>
<text x="563.8" y="178.1" font-size="9.6" fill="#1C4C1C" font-weight="bold" textLength="95.2" lengthAdjust="spacingAndGlyphs" stroke="#1C4C1C" stroke-width="0.28">.tran 0 100m 90m 10u</text>
<text x="558.9" y="506.4" font-size="9.3" fill="#141414" font-weight="bold" textLength="63.2" lengthAdjust="spacingAndGlyphs" stroke="#141414" stroke-width="0.28">SINE(0 5m 1k)</text>
<polyline points="607.80,220.00 607.80,210.80 857.10,210.80 857.10,218.90" stroke="#0000FF" stroke-width="1.4" fill="none" stroke-linejoin="miter" stroke-linecap="square"/>
<rect x="659.0" y="208.4" width="4.8" height="4.8" fill="#0000FF"/>
<rect x="742.2" y="208.4" width="4.8" height="4.8" fill="#0000FF"/>
<line x1="601.6" y1="220.4" x2="614.0" y2="220.4" stroke="#1A1A90" stroke-width="1.4"/>
<path d="M601.6,226.6 Q607.8,222.6 614.0,226.6" fill="none" stroke="#1A1A90" stroke-width="1.4"/>
<line x1="607.8" y1="224.4" x2="607.8" y2="229" stroke="#1A1A90" stroke-width="1.25"/>
<polyline points="607.80,229.00 607.80,234.20" stroke="#0000FF" stroke-width="1.4" fill="none" stroke-linejoin="miter" stroke-linecap="square"/>
<path d="M601.20,234.20 H614.40 L607.80,241.20 Z" fill="none" stroke="#0000FF" stroke-width="1.3" stroke-linejoin="miter"/>
<line x1="602.6" y1="216.9" x2="607.0" y2="216.9" stroke="#1A1A90" stroke-width="1.1"/>
<line x1="604.8" y1="214.7" x2="604.8" y2="219.1" stroke="#1A1A90" stroke-width="1.1"/>
<text x="586.8" y="215.7" font-size="8.3" fill="#141414" font-weight="bold" textLength="10.8" lengthAdjust="spacingAndGlyphs" stroke="#141414" stroke-width="0.28">C1</text>
<text x="576.6" y="232.5" font-size="8.3" fill="#141414" font-weight="bold" textLength="15.6" lengthAdjust="spacingAndGlyphs" stroke="#141414" stroke-width="0.28">22µ</text>
<polyline points="661.40,218.90 666.70,221.99 656.10,228.16 666.70,234.34 656.10,240.51 661.40,243.60" stroke="#1A1A90" stroke-width="1.25" fill="none" stroke-linejoin="miter"/>
<polyline points="661.40,210.80 661.40,218.90" stroke="#0000FF" stroke-width="1.4" fill="none" stroke-linejoin="miter" stroke-linecap="square"/>
<polyline points="661.40,243.60 661.40,252.40" stroke="#0000FF" stroke-width="1.4" fill="none" stroke-linejoin="miter" stroke-linecap="square"/>
<rect x="659.0" y="250.0" width="4.8" height="4.8" fill="#0000FF"/>
<text x="669.0" y="228.6" font-size="8.3" fill="#141414" font-weight="bold" textLength="11.3" lengthAdjust="spacingAndGlyphs" stroke="#141414" stroke-width="0.28">R2</text>
<text x="669.0" y="242.4" font-size="8.3" fill="#141414" font-weight="bold" textLength="15.8" lengthAdjust="spacingAndGlyphs" stroke="#141414" stroke-width="0.28">47k</text>
<polyline points="661.40,252.40 708.80,252.40 708.80,293.50" stroke="#0000FF" stroke-width="1.4" fill="none" stroke-linejoin="miter" stroke-linecap="square"/>
<line x1="708.8" y1="293.5" x2="708.8" y2="298.3" stroke="#1A1A90" stroke-width="1.25"/>
<line x1="702.5999999999999" y1="298.6" x2="715.0" y2="298.6" stroke="#1A1A90" stroke-width="1.45"/>
<line x1="702.5999999999999" y1="301.2" x2="715.0" y2="301.2" stroke="#1A1A90" stroke-width="1.45"/>
<line x1="708.8" y1="301.2" x2="708.8" y2="306" stroke="#1A1A90" stroke-width="1.25"/>
<polyline points="708.80,306.00 708.80,433.30" stroke="#0000FF" stroke-width="1.4" fill="none" stroke-linejoin="miter" stroke-linecap="square"/>
<text x="697.7" y="250.5" font-size="8.8" fill="#BC1010" font-weight="bold" textLength="10.0" lengthAdjust="spacingAndGlyphs" stroke="#BC1010" stroke-width="0.28">a1</text>
<text x="694.8" y="294.6" font-size="8.3" fill="#141414" font-weight="bold" textLength="10.6" lengthAdjust="spacingAndGlyphs" stroke="#141414" stroke-width="0.28">C4</text>
<text x="684.8" y="311.7" font-size="8.3" fill="#141414" font-weight="bold" textLength="20.6" lengthAdjust="spacingAndGlyphs" stroke="#141414" stroke-width="0.28">100n</text>
<rect x="706.4" y="321.6" width="4.8" height="4.8" fill="#0000FF"/>
<polyline points="744.60,210.80 744.60,219.20" stroke="#0000FF" stroke-width="1.4" fill="none" stroke-linejoin="miter" stroke-linecap="square"/>
<circle cx="744.6" cy="230.8" r="11.6" fill="none" stroke="#1A1A90" stroke-width="1.25"/>
<line x1="742.0" y1="224.60000000000002" x2="747.2" y2="224.60000000000002" stroke="#1A1A90" stroke-width="1.2"/>
<line x1="744.6" y1="222.0" x2="744.6" y2="227.20000000000002" stroke="#1A1A90" stroke-width="1.2"/>
<line x1="742.0" y1="238.70000000000002" x2="747.2" y2="238.70000000000002" stroke="#1A1A90" stroke-width="1.2"/>
<polyline points="744.60,242.40 744.60,246.40" stroke="#0000FF" stroke-width="1.4" fill="none" stroke-linejoin="miter" stroke-linecap="square"/>
<path d="M738.00,246.40 H751.20 L744.60,253.40 Z" fill="none" stroke="#0000FF" stroke-width="1.3" stroke-linejoin="miter"/>
<text x="753.8" y="220.1" font-size="8.3" fill="#141414" font-weight="bold" textLength="10.8" lengthAdjust="spacingAndGlyphs" stroke="#141414" stroke-width="0.28">V1</text>
<text x="753.8" y="249.9" font-size="8.3" fill="#141414" font-weight="bold" textLength="15.6" lengthAdjust="spacingAndGlyphs" stroke="#141414" stroke-width="0.28">320</text>
<text x="691.6" y="209.1" font-size="8.8" fill="#BC1010" font-weight="bold" textLength="11.4" lengthAdjust="spacingAndGlyphs" stroke="#BC1010" stroke-width="0.28">pit</text>
<circle cx="660.9" cy="275.9" r="17.9" fill="none" stroke="#1A1A90" stroke-width="1.25"/>
<line x1="661.4" y1="258.0" x2="661.4" y2="269.5" stroke="#1A1A90" stroke-width="1.25"/>
<rect x="652.90" y="269.50" width="16" height="2.2" rx="1.1" fill="#1A1A90"/>
<line x1="643.0" y1="275.4" x2="650.4" y2="275.4" stroke="#1A1A90" stroke-width="1.25"/>
<line x1="653.4" y1="275.4" x2="657.1" y2="275.4" stroke="#1A1A90" stroke-width="1.25"/>
<line x1="659.5" y1="275.4" x2="663.2" y2="275.4" stroke="#1A1A90" stroke-width="1.25"/>
<line x1="665.6" y1="275.4" x2="669.3000000000001" y2="275.4" stroke="#1A1A90" stroke-width="1.25"/>
<line x1="671.6999999999999" y1="275.4" x2="675.4" y2="275.4" stroke="#1A1A90" stroke-width="1.25"/>
<path d="M649.30,294.30 V284.70 Q649.60,281.30 652.90,281.30 H670.50 L673.10,283.90" fill="none" stroke="#1A1A90" stroke-width="1.3"/>
<line x1="652.4" y1="282.09999999999997" x2="670.6999999999999" y2="282.09999999999997" stroke="#1A1A90" stroke-width="1.3"/>
<text x="652.70" y="301.50" font-size="3.6" fill="#2A2A2A" font-weight="bold" textLength="11.5" lengthAdjust="spacingAndGlyphs">12AX7</text>
<text x="664.5" y="253.6" font-size="3.8" fill="#3A3030" font-weight="bold" textLength="4.8" lengthAdjust="spacingAndGlyphs">U4</text>
<polyline points="661.40,252.40 661.40,258.00" stroke="#0000FF" stroke-width="1.4" fill="none" stroke-linejoin="miter" stroke-linecap="square"/>
<polyline points="609.60,275.60 643.00,275.60" stroke="#0000FF" stroke-width="1.4" fill="none" stroke-linejoin="miter" stroke-linecap="square"/>
<line x1="606.0" y1="270.2" x2="606.0" y2="282.2" stroke="#1A1A90" stroke-width="1.45"/>
<line x1="609.6" y1="270.2" x2="609.6" y2="282.2" stroke="#1A1A90" stroke-width="1.45"/>
<polyline points="596.60,276.20 606.00,276.20" stroke="#0000FF" stroke-width="1.4" fill="none" stroke-linejoin="miter" stroke-linecap="square"/>
<path d="M596.60,269.60 V282.80 L589.40,276.20 Z" fill="none" stroke="#0000FF" stroke-width="1.3" stroke-linejoin="miter"/>
<rect x="623.1" y="273.20000000000005" width="4.8" height="4.8" fill="#0000FF"/>
<text x="602.1" y="268.0" font-size="8.3" fill="#141414" font-weight="bold" textLength="11.1" lengthAdjust="spacingAndGlyphs" stroke="#141414" stroke-width="0.28">C8</text>
<text x="597.5" y="290.7" font-size="8.3" fill="#141414" font-weight="bold" textLength="20.5" lengthAdjust="spacingAndGlyphs" stroke="#141414" stroke-width="0.28">470n</text>
<polyline points="625.50,275.60 625.50,296.90" stroke="#0000FF" stroke-width="1.4" fill="none" stroke-linejoin="miter" stroke-linecap="square"/>
<polyline points="625.50,296.90 630.80,299.99 620.20,306.16 630.80,312.34 620.20,318.51 625.50,321.60" stroke="#1A1A90" stroke-width="1.25" fill="none" stroke-linejoin="miter"/>
<polyline points="625.50,321.60 625.50,335.40 649.40,335.40" stroke="#0000FF" stroke-width="1.4" fill="none" stroke-linejoin="miter" stroke-linecap="square"/>
<text x="601.0" y="306.1" font-size="8.3" fill="#141414" font-weight="bold" textLength="16.8" lengthAdjust="spacingAndGlyphs" stroke="#141414" stroke-width="0.28">R13</text>
<text x="594.7" y="319.7" font-size="8.3" fill="#141414" font-weight="bold" textLength="23.3" lengthAdjust="spacingAndGlyphs" stroke="#141414" stroke-width="0.28">1Meg</text>
<polyline points="649.30,294.20 649.30,335.40" stroke="#0000FF" stroke-width="1.4" fill="none" stroke-linejoin="miter" stroke-linecap="square"/>
<rect x="647.0" y="333.0" width="4.8" height="4.8" fill="#0000FF"/>
<circle cx="649.1" cy="365.2" r="17.9" fill="none" stroke="#1A1A90" stroke-width="1.25"/>
<line x1="649.6" y1="347.3" x2="649.6" y2="358.8" stroke="#1A1A90" stroke-width="1.25"/>
<rect x="641.10" y="358.80" width="16" height="2.2" rx="1.1" fill="#1A1A90"/>
<line x1="631.2" y1="364.7" x2="638.6" y2="364.7" stroke="#1A1A90" stroke-width="1.25"/>
<line x1="641.6" y1="364.7" x2="645.3000000000001" y2="364.7" stroke="#1A1A90" stroke-width="1.25"/>
<line x1="647.7" y1="364.7" x2="651.4000000000001" y2="364.7" stroke="#1A1A90" stroke-width="1.25"/>
<line x1="653.8000000000001" y1="364.7" x2="657.5000000000001" y2="364.7" stroke="#1A1A90" stroke-width="1.25"/>
<line x1="659.9" y1="364.7" x2="663.6" y2="364.7" stroke="#1A1A90" stroke-width="1.25"/>
<path d="M637.50,383.60 V374.00 Q637.80,370.60 641.10,370.60 H658.70 L661.30,373.20" fill="none" stroke="#1A1A90" stroke-width="1.3"/>
<line x1="640.6" y1="371.4" x2="658.9" y2="371.4" stroke="#1A1A90" stroke-width="1.3"/>
<text x="640.90" y="390.80" font-size="3.6" fill="#2A2A2A" font-weight="bold" textLength="11.5" lengthAdjust="spacingAndGlyphs">12AX7</text>
<text x="652.7" y="342.9" font-size="3.8" fill="#3A3030" font-weight="bold" textLength="4.8" lengthAdjust="spacingAndGlyphs">U4</text>
<polyline points="649.40,335.40 649.40,347.30" stroke="#0000FF" stroke-width="1.4" fill="none" stroke-linejoin="miter" stroke-linecap="square"/>
<polyline points="571.80,392.30 571.80,365.10 631.20,365.10" stroke="#0000FF" stroke-width="1.4" fill="none" stroke-linejoin="miter" stroke-linecap="square"/>
<rect x="593.6" y="362.70000000000005" width="4.8" height="4.8" fill="#0000FF"/>
<text x="591.7" y="363.5" font-size="8.8" fill="#BC1010" font-weight="bold" textLength="7.8" lengthAdjust="spacingAndGlyphs" stroke="#BC1010" stroke-width="0.28">in</text>
<circle cx="571.7" cy="403.8" r="11.6" fill="none" stroke="#1A1A90" stroke-width="1.25"/>
<line x1="569.1" y1="397.6" x2="574.3000000000001" y2="397.6" stroke="#1A1A90" stroke-width="1.2"/>
<line x1="571.7" y1="395.0" x2="571.7" y2="400.2" stroke="#1A1A90" stroke-width="1.2"/>
<line x1="569.1" y1="411.7" x2="574.3000000000001" y2="411.7" stroke="#1A1A90" stroke-width="1.2"/>
<polyline points="571.80,415.40 571.80,430.70" stroke="#0000FF" stroke-width="1.4" fill="none" stroke-linejoin="miter" stroke-linecap="square"/>
<path d="M565.20,430.70 H578.40 L571.80,437.70 Z" fill="none" stroke="#0000FF" stroke-width="1.3" stroke-linejoin="miter"/>
<text x="575.3" y="388.7" font-size="8.3" fill="#141414" font-weight="bold" textLength="10.8" lengthAdjust="spacingAndGlyphs" stroke="#141414" stroke-width="0.28">V3</text>
<polyline points="595.80,365.10 595.80,445.40" stroke="#0000FF" stroke-width="1.4" fill="none" stroke-linejoin="miter" stroke-linecap="square"/>
<polyline points="595.80,445.40 601.10,448.52 590.50,454.77 601.10,461.02 590.50,467.27 595.80,470.40" stroke="#1A1A90" stroke-width="1.25" fill="none" stroke-linejoin="miter"/>
<polyline points="595.80,470.40 595.80,478.60" stroke="#0000FF" stroke-width="1.4" fill="none" stroke-linejoin="miter" stroke-linecap="square"/>
<text x="602.4" y="458.6" font-size="8.3" fill="#141414" font-weight="bold" textLength="16.2" lengthAdjust="spacingAndGlyphs" stroke="#141414" stroke-width="0.28">47k</text>
<text x="601.6" y="474.5" font-size="8.3" fill="#141414" font-weight="bold" textLength="11.3" lengthAdjust="spacingAndGlyphs" stroke="#141414" stroke-width="0.28">R1</text>
<polyline points="637.50,383.10 637.50,409.40" stroke="#0000FF" stroke-width="1.4" fill="none" stroke-linejoin="miter" stroke-linecap="square"/>
<polyline points="637.50,409.40 642.80,412.49 632.20,418.66 642.80,424.84 632.20,431.01 637.50,434.10" stroke="#1A1A90" stroke-width="1.25" fill="none" stroke-linejoin="miter"/>
<polyline points="637.50,434.10 637.50,478.60" stroke="#0000FF" stroke-width="1.4" fill="none" stroke-linejoin="miter" stroke-linecap="square"/>
<text x="621.7" y="412.6" font-size="8.3" fill="#141414" font-weight="bold" textLength="11.6" lengthAdjust="spacingAndGlyphs" stroke="#141414" stroke-width="0.28">R3</text>
<text x="614.0" y="425.6" font-size="8.3" fill="#141414" font-weight="bold" textLength="15.8" lengthAdjust="spacingAndGlyphs" stroke="#141414" stroke-width="0.28">560</text>
<polyline points="595.80,478.60 756.30,478.60 756.30,458.20" stroke="#0000FF" stroke-width="1.4" fill="none" stroke-linejoin="miter" stroke-linecap="square"/>
<rect x="635.2" y="476.20000000000005" width="4.8" height="4.8" fill="#0000FF"/>
<rect x="706.4" y="476.20000000000005" width="4.8" height="4.8" fill="#0000FF"/>
<rect x="724.0" y="476.20000000000005" width="4.8" height="4.8" fill="#0000FF"/>
<polyline points="637.60,478.60 637.60,484.70" stroke="#0000FF" stroke-width="1.4" fill="none" stroke-linejoin="miter" stroke-linecap="square"/>
<path d="M631.00,484.70 H644.20 L637.60,491.70 Z" fill="none" stroke="#0000FF" stroke-width="1.3" stroke-linejoin="miter"/>
<polyline points="708.80,324.00 726.40,324.00 726.40,324.70" stroke="#0000FF" stroke-width="1.4" fill="none" stroke-linejoin="miter" stroke-linecap="square"/>
<polyline points="726.40,324.70 731.70,327.95 721.10,334.45 731.70,340.95 721.10,347.45 726.40,350.70" stroke="#1A1A90" stroke-width="1.25" fill="none" stroke-linejoin="miter"/>
<polyline points="726.40,350.70 726.40,359.20 756.30,359.20 756.30,377.60" stroke="#0000FF" stroke-width="1.4" fill="none" stroke-linejoin="miter" stroke-linecap="square"/>
<rect x="724.0" y="356.8" width="4.8" height="4.8" fill="#0000FF"/>
<text x="731.6" y="325.9" font-size="8.3" fill="#141414" font-weight="bold" textLength="11.7" lengthAdjust="spacingAndGlyphs" stroke="#141414" stroke-width="0.28">R7</text>
<text x="733.7" y="338.5" font-size="8.3" fill="#141414" font-weight="bold" textLength="21.5" lengthAdjust="spacingAndGlyphs" stroke="#141414" stroke-width="0.28">620k</text>
<text x="754.2" y="357.6" font-size="8.8" fill="#BC1010" font-weight="bold" textLength="4.8" lengthAdjust="spacingAndGlyphs" stroke="#BC1010" stroke-width="0.28">1</text>
<line x1="756.3" y1="377.6" x2="756.3" y2="382" stroke="#1A1A90" stroke-width="1.25"/>
<line x1="750.0999999999999" y1="382.0" x2="762.5" y2="382.0" stroke="#1A1A90" stroke-width="1.45"/>
<line x1="750.0999999999999" y1="384.5" x2="762.5" y2="384.5" stroke="#1A1A90" stroke-width="1.45"/>
<line x1="756.3" y1="384.5" x2="756.3" y2="390" stroke="#1A1A90" stroke-width="1.25"/>
<polyline points="756.30,390.00 756.30,433.70" stroke="#0000FF" stroke-width="1.4" fill="none" stroke-linejoin="miter" stroke-linecap="square"/>
<text x="759.7" y="377.9" font-size="8.3" fill="#141414" font-weight="bold" textLength="11.0" lengthAdjust="spacingAndGlyphs" stroke="#141414" stroke-width="0.28">C6</text>
<text x="760.0" y="395.9" font-size="8.3" fill="#141414" font-weight="bold" textLength="10.0" lengthAdjust="spacingAndGlyphs" stroke="#141414" stroke-width="0.28">3n</text>
<polyline points="726.40,359.20 726.40,383.70" stroke="#0000FF" stroke-width="1.4" fill="none" stroke-linejoin="miter" stroke-linecap="square"/>
<line x1="726.4" y1="383.7" x2="726.4" y2="394" stroke="#1A1A90" stroke-width="1.25"/>
<line x1="720.1999999999999" y1="394.0" x2="732.6" y2="394.0" stroke="#1A1A90" stroke-width="1.45"/>
<line x1="720.1999999999999" y1="396.4" x2="732.6" y2="396.4" stroke="#1A1A90" stroke-width="1.45"/>
<line x1="726.4" y1="396.4" x2="726.4" y2="407" stroke="#1A1A90" stroke-width="1.25"/>
<polyline points="726.40,407.00 726.40,478.60" stroke="#0000FF" stroke-width="1.4" fill="none" stroke-linejoin="miter" stroke-linecap="square"/>
<text x="729.6" y="389.7" font-size="8.3" fill="#141414" font-weight="bold" textLength="10.9" lengthAdjust="spacingAndGlyphs" stroke="#141414" stroke-width="0.28">C5</text>
<text x="730.0" y="407.8" font-size="8.3" fill="#141414" font-weight="bold" textLength="10.0" lengthAdjust="spacingAndGlyphs" stroke="#141414" stroke-width="0.28">1n</text>
<polyline points="708.80,433.30 714.10,436.39 703.50,442.56 714.10,448.74 703.50,454.91 708.80,458.00" stroke="#1A1A90" stroke-width="1.25" fill="none" stroke-linejoin="miter"/>
<polyline points="708.80,458.00 708.80,478.60" stroke="#0000FF" stroke-width="1.4" fill="none" stroke-linejoin="miter" stroke-linecap="square"/>
<text x="694.0" y="436.1" font-size="8.3" fill="#141414" font-weight="bold" textLength="10.9" lengthAdjust="spacingAndGlyphs" stroke="#141414" stroke-width="0.28">R5</text>
<text x="681.0" y="452.0" font-size="8.3" fill="#141414" font-weight="bold" textLength="22.6" lengthAdjust="spacingAndGlyphs" stroke="#141414" stroke-width="0.28">1Meg</text>
<polyline points="756.30,433.70 761.60,436.76 751.00,442.89 761.60,449.01 751.00,455.14 756.30,458.20" stroke="#1A1A90" stroke-width="1.25" fill="none" stroke-linejoin="miter"/>
<text x="737.4" y="442.0" font-size="8.3" fill="#141414" font-weight="bold" textLength="11.4" lengthAdjust="spacingAndGlyphs" stroke="#141414" stroke-width="0.28">R8</text>
<text x="735.0" y="451.3" font-size="8.3" fill="#141414" font-weight="bold" textLength="15.8" lengthAdjust="spacingAndGlyphs" stroke="#141414" stroke-width="0.28">92k</text>
<polyline points="857.10,218.90 862.40,221.99 851.80,228.16 862.40,234.34 851.80,240.51 857.10,243.60" stroke="#1A1A90" stroke-width="1.25" fill="none" stroke-linejoin="miter"/>
<polyline points="857.10,243.60 857.10,252.20" stroke="#0000FF" stroke-width="1.4" fill="none" stroke-linejoin="miter" stroke-linecap="square"/>
<rect x="854.7" y="249.79999999999998" width="4.8" height="4.8" fill="#0000FF"/>
<text x="865.2" y="228.6" font-size="8.3" fill="#141414" font-weight="bold" textLength="11.3" lengthAdjust="spacingAndGlyphs" stroke="#141414" stroke-width="0.28">R9</text>
<text x="865.2" y="242.3" font-size="8.3" fill="#141414" font-weight="bold" textLength="15.8" lengthAdjust="spacingAndGlyphs" stroke="#141414" stroke-width="0.28">47k</text>
<polyline points="857.10,252.20 898.80,252.20 898.80,388.00" stroke="#0000FF" stroke-width="1.4" fill="none" stroke-linejoin="miter" stroke-linecap="square"/>
<text x="887.6" y="250.4" font-size="8.8" fill="#BC1010" font-weight="bold" textLength="10.6" lengthAdjust="spacingAndGlyphs" stroke="#BC1010" stroke-width="0.28">a2</text>
<circle cx="857.5" cy="276.0" r="17.9" fill="none" stroke="#1A1A90" stroke-width="1.25"/>
<line x1="858.0" y1="258.1" x2="858.0" y2="269.6" stroke="#1A1A90" stroke-width="1.25"/>
<rect x="849.50" y="269.60" width="16" height="2.2" rx="1.1" fill="#1A1A90"/>
<line x1="839.6" y1="275.5" x2="847.0" y2="275.5" stroke="#1A1A90" stroke-width="1.25"/>
<line x1="850.0" y1="275.5" x2="853.7" y2="275.5" stroke="#1A1A90" stroke-width="1.25"/>
<line x1="856.1" y1="275.5" x2="859.8000000000001" y2="275.5" stroke="#1A1A90" stroke-width="1.25"/>
<line x1="862.2" y1="275.5" x2="865.9000000000001" y2="275.5" stroke="#1A1A90" stroke-width="1.25"/>
<line x1="868.3" y1="275.5" x2="872.0" y2="275.5" stroke="#1A1A90" stroke-width="1.25"/>
<path d="M845.90,294.40 V284.80 Q846.20,281.40 849.50,281.40 H867.10 L869.70,284.00" fill="none" stroke="#1A1A90" stroke-width="1.3"/>
<line x1="849.0" y1="282.2" x2="867.3" y2="282.2" stroke="#1A1A90" stroke-width="1.3"/>
<text x="849.30" y="301.60" font-size="3.6" fill="#2A2A2A" font-weight="bold" textLength="11.5" lengthAdjust="spacingAndGlyphs">12AX7</text>
<text x="861.1" y="253.7" font-size="3.8" fill="#3A3030" font-weight="bold" textLength="4.8" lengthAdjust="spacingAndGlyphs">U4</text>
<polyline points="857.10,252.20 857.10,258.00" stroke="#0000FF" stroke-width="1.4" fill="none" stroke-linejoin="miter" stroke-linecap="square"/>
<polyline points="805.60,275.60 839.60,275.60" stroke="#0000FF" stroke-width="1.4" fill="none" stroke-linejoin="miter" stroke-linecap="square"/>
<line x1="802.4" y1="270.0" x2="802.4" y2="282.0" stroke="#1A1A90" stroke-width="1.45"/>
<line x1="805.6" y1="270.0" x2="805.6" y2="282.0" stroke="#1A1A90" stroke-width="1.45"/>
<polyline points="792.00,276.00 802.40,276.00" stroke="#0000FF" stroke-width="1.4" fill="none" stroke-linejoin="miter" stroke-linecap="square"/>
<path d="M792.00,269.40 V282.60 L784.80,276.00 Z" fill="none" stroke="#0000FF" stroke-width="1.3" stroke-linejoin="miter"/>
<rect x="819.6" y="273.20000000000005" width="4.8" height="4.8" fill="#0000FF"/>
<text x="798.0" y="267.9" font-size="8.3" fill="#141414" font-weight="bold" textLength="11.7" lengthAdjust="spacingAndGlyphs" stroke="#141414" stroke-width="0.28">C9</text>
<text x="793.6" y="290.5" font-size="8.3" fill="#141414" font-weight="bold" textLength="21.3" lengthAdjust="spacingAndGlyphs" stroke="#141414" stroke-width="0.28">470n</text>
<polyline points="822.00,275.60 822.00,296.60" stroke="#0000FF" stroke-width="1.4" fill="none" stroke-linejoin="miter" stroke-linecap="square"/>
<polyline points="822.00,296.60 827.30,299.69 816.70,305.86 827.30,312.04 816.70,318.21 822.00,321.30" stroke="#1A1A90" stroke-width="1.25" fill="none" stroke-linejoin="miter"/>
<polyline points="822.00,321.30 822.00,335.50 845.80,335.50" stroke="#0000FF" stroke-width="1.4" fill="none" stroke-linejoin="miter" stroke-linecap="square"/>
<text x="797.4" y="306.3" font-size="8.3" fill="#141414" font-weight="bold" textLength="16.7" lengthAdjust="spacingAndGlyphs" stroke="#141414" stroke-width="0.28">R14</text>
<text x="793.0" y="319.3" font-size="8.3" fill="#141414" font-weight="bold" textLength="21.1" lengthAdjust="spacingAndGlyphs" stroke="#141414" stroke-width="0.28">470k</text>
<polyline points="845.90,294.00 845.90,335.50" stroke="#0000FF" stroke-width="1.4" fill="none" stroke-linejoin="miter" stroke-linecap="square"/>
<rect x="843.4" y="333.1" width="4.8" height="4.8" fill="#0000FF"/>
<circle cx="845.8" cy="365.4" r="17.9" fill="none" stroke="#1A1A90" stroke-width="1.25"/>
<line x1="846.3" y1="347.5" x2="846.3" y2="359.0" stroke="#1A1A90" stroke-width="1.25"/>
<rect x="837.80" y="359.00" width="16" height="2.2" rx="1.1" fill="#1A1A90"/>
<line x1="827.9" y1="364.9" x2="835.3" y2="364.9" stroke="#1A1A90" stroke-width="1.25"/>
<line x1="838.3" y1="364.9" x2="842.0" y2="364.9" stroke="#1A1A90" stroke-width="1.25"/>
<line x1="844.4" y1="364.9" x2="848.1" y2="364.9" stroke="#1A1A90" stroke-width="1.25"/>
<line x1="850.5" y1="364.9" x2="854.2" y2="364.9" stroke="#1A1A90" stroke-width="1.25"/>
<line x1="856.5999999999999" y1="364.9" x2="860.3" y2="364.9" stroke="#1A1A90" stroke-width="1.25"/>
<path d="M834.20,383.80 V374.20 Q834.50,370.80 837.80,370.80 H855.40 L858.00,373.40" fill="none" stroke="#1A1A90" stroke-width="1.3"/>
<line x1="837.3" y1="371.59999999999997" x2="855.5999999999999" y2="371.59999999999997" stroke="#1A1A90" stroke-width="1.3"/>
<text x="837.60" y="391.00" font-size="3.6" fill="#2A2A2A" font-weight="bold" textLength="11.5" lengthAdjust="spacingAndGlyphs">12AX7</text>
<text x="849.4" y="343.1" font-size="3.8" fill="#3A3030" font-weight="bold" textLength="4.8" lengthAdjust="spacingAndGlyphs">U4</text>
<polyline points="845.80,335.50 845.80,347.40" stroke="#0000FF" stroke-width="1.4" fill="none" stroke-linejoin="miter" stroke-linecap="square"/>
<polyline points="827.90,364.90 791.40,364.90 791.40,446.30" stroke="#0000FF" stroke-width="1.4" fill="none" stroke-linejoin="miter" stroke-linecap="square"/>
<text x="787.8" y="363.7" font-size="8.8" fill="#BC1010" font-weight="bold" textLength="7.5" lengthAdjust="spacingAndGlyphs" stroke="#BC1010" stroke-width="0.28">in</text>
<polyline points="791.60,446.30 796.90,448.93 786.30,454.18 796.90,459.43 786.30,464.68 791.60,467.30" stroke="#1A1A90" stroke-width="1.25" fill="none" stroke-linejoin="miter"/>
<polyline points="791.60,467.30 791.60,478.30" stroke="#0000FF" stroke-width="1.4" fill="none" stroke-linejoin="miter" stroke-linecap="square"/>
<text x="798.4" y="458.4" font-size="8.3" fill="#141414" font-weight="bold" textLength="16.6" lengthAdjust="spacingAndGlyphs" stroke="#141414" stroke-width="0.28">47k</text>
<text x="797.9" y="474.2" font-size="8.3" fill="#141414" font-weight="bold" textLength="11.3" lengthAdjust="spacingAndGlyphs" stroke="#141414" stroke-width="0.28">R6</text>
<polyline points="834.20,383.30 834.20,409.70" stroke="#0000FF" stroke-width="1.4" fill="none" stroke-linejoin="miter" stroke-linecap="square"/>
<polyline points="833.90,409.70 839.20,412.81 828.60,419.04 839.20,425.26 828.60,431.49 833.90,434.60" stroke="#1A1A90" stroke-width="1.25" fill="none" stroke-linejoin="miter"/>
<polyline points="833.90,434.60 833.90,478.30" stroke="#0000FF" stroke-width="1.4" fill="none" stroke-linejoin="miter" stroke-linecap="square"/>
<text x="811.4" y="410.9" font-size="8.3" fill="#141414" font-weight="bold" textLength="17.1" lengthAdjust="spacingAndGlyphs" stroke="#141414" stroke-width="0.28">R12</text>
<text x="810.5" y="425.7" font-size="8.3" fill="#141414" font-weight="bold" textLength="15.6" lengthAdjust="spacingAndGlyphs" stroke="#141414" stroke-width="0.28">560</text>
<polyline points="791.60,478.30 928.80,478.30 928.80,458.10" stroke="#0000FF" stroke-width="1.4" fill="none" stroke-linejoin="miter" stroke-linecap="square"/>
<rect x="831.5" y="475.90000000000003" width="4.8" height="4.8" fill="#0000FF"/>
<rect x="896.4" y="475.90000000000003" width="4.8" height="4.8" fill="#0000FF"/>
<polyline points="833.90,478.30 833.90,484.40" stroke="#0000FF" stroke-width="1.4" fill="none" stroke-linejoin="miter" stroke-linecap="square"/>
<path d="M827.30,484.40 H840.50 L833.90,491.40 Z" fill="none" stroke="#0000FF" stroke-width="1.3" stroke-linejoin="miter"/>
<line x1="898.8" y1="388" x2="898.8" y2="393.8" stroke="#1A1A90" stroke-width="1.25"/>
<line x1="892.5999999999999" y1="393.8" x2="905.0" y2="393.8" stroke="#1A1A90" stroke-width="1.45"/>
<line x1="892.5999999999999" y1="396.4" x2="905.0" y2="396.4" stroke="#1A1A90" stroke-width="1.45"/>
<line x1="898.8" y1="396.4" x2="898.8" y2="402" stroke="#1A1A90" stroke-width="1.25"/>
<polyline points="898.80,402.00 898.80,478.30" stroke="#0000FF" stroke-width="1.4" fill="none" stroke-linejoin="miter" stroke-linecap="square"/>
<rect x="896.4" y="357.3" width="4.8" height="4.8" fill="#0000FF"/>
<polyline points="898.80,359.70 928.80,359.70" stroke="#0000FF" stroke-width="1.4" fill="none" stroke-linejoin="miter" stroke-linecap="square"/>
<rect x="926.4" y="357.3" width="4.8" height="4.8" fill="#0000FF"/>
<text x="901.9" y="390.1" font-size="8.3" fill="#141414" font-weight="bold" textLength="10.5" lengthAdjust="spacingAndGlyphs" stroke="#141414" stroke-width="0.28">C3</text>
<text x="902.0" y="408.1" font-size="8.3" fill="#141414" font-weight="bold" textLength="15.0" lengthAdjust="spacingAndGlyphs" stroke="#141414" stroke-width="0.28">15n</text>
<polyline points="928.80,359.70 928.80,376.00" stroke="#0000FF" stroke-width="1.4" fill="none" stroke-linejoin="miter" stroke-linecap="square"/>
<line x1="928.8" y1="376" x2="928.8" y2="381.8" stroke="#1A1A90" stroke-width="1.25"/>
<line x1="922.5999999999999" y1="381.8" x2="935.0" y2="381.8" stroke="#1A1A90" stroke-width="1.45"/>
<line x1="922.5999999999999" y1="384.3" x2="935.0" y2="384.3" stroke="#1A1A90" stroke-width="1.45"/>
<line x1="928.8" y1="384.3" x2="928.8" y2="390" stroke="#1A1A90" stroke-width="1.25"/>
<polyline points="928.80,390.00 928.80,435.00" stroke="#0000FF" stroke-width="1.4" fill="none" stroke-linejoin="miter" stroke-linecap="square"/>
<polyline points="928.80,435.00 934.10,437.89 923.50,443.66 934.10,449.44 923.50,455.21 928.80,458.10" stroke="#1A1A90" stroke-width="1.25" fill="none" stroke-linejoin="miter"/>
<text x="931.4" y="378.5" font-size="8.3" fill="#141414" font-weight="bold" textLength="10.8" lengthAdjust="spacingAndGlyphs" stroke="#141414" stroke-width="0.28">C7</text>
<text x="931.4" y="395.2" font-size="8.3" fill="#141414" font-weight="bold" textLength="15.2" lengthAdjust="spacingAndGlyphs" stroke="#141414" stroke-width="0.28">47n</text>
<text x="909.6" y="442.3" font-size="8.3" fill="#141414" font-weight="bold" textLength="11.5" lengthAdjust="spacingAndGlyphs" stroke="#141414" stroke-width="0.28">R4</text>
<text x="907.0" y="451.3" font-size="8.3" fill="#141414" font-weight="bold" textLength="14.0" lengthAdjust="spacingAndGlyphs" stroke="#141414" stroke-width="0.28">6k8</text>
<path d="M922.30,288.20 H935.50 L928.90,281.20 Z" fill="none" stroke="#0000FF" stroke-width="1.3" stroke-linejoin="miter"/>
<polyline points="928.90,288.40 934.20,291.60 923.60,298.00 934.20,304.40 923.60,310.80 928.90,314.00" stroke="#1A1A90" stroke-width="1.25" fill="none" stroke-linejoin="miter"/>
<polyline points="928.90,314.00 928.90,335.70" stroke="#0000FF" stroke-width="1.4" fill="none" stroke-linejoin="miter" stroke-linecap="square"/>
<line x1="928.9" y1="335.7" x2="928.9" y2="346" stroke="#1A1A90" stroke-width="1.25"/>
<line x1="922.6999999999999" y1="346.0" x2="935.1" y2="346.0" stroke="#1A1A90" stroke-width="1.45"/>
<line x1="922.6999999999999" y1="348.9" x2="935.1" y2="348.9" stroke="#1A1A90" stroke-width="1.45"/>
<line x1="928.9" y1="348.9" x2="928.9" y2="355" stroke="#1A1A90" stroke-width="1.25"/>
<polyline points="928.90,355.00 928.90,359.70" stroke="#0000FF" stroke-width="1.4" fill="none" stroke-linejoin="miter" stroke-linecap="square"/>
<text x="0" y="0" font-size="8.6" font-weight="bold" fill="#BC1010" transform="translate(927.4,333.2) rotate(-90)" textLength="5.6" lengthAdjust="spacingAndGlyphs">2</text>
<text x="936.5" y="300.6" font-size="8.3" fill="#141414" font-weight="bold" textLength="16.9" lengthAdjust="spacingAndGlyphs" stroke="#141414" stroke-width="0.28">R10</text>
<text x="936.9" y="314.1" font-size="8.3" fill="#141414" font-weight="bold" textLength="23.1" lengthAdjust="spacingAndGlyphs" stroke="#141414" stroke-width="0.28">1Meg</text>
<text x="940.6" y="346.7" font-size="8.3" fill="#141414" font-weight="bold" textLength="11.3" lengthAdjust="spacingAndGlyphs" stroke="#141414" stroke-width="0.28">C2</text>
<text x="932.7" y="359.9" font-size="8.3" fill="#141414" font-weight="bold" textLength="20.5" lengthAdjust="spacingAndGlyphs" stroke="#141414" stroke-width="0.28">100n</text>
</svg></body></html>
